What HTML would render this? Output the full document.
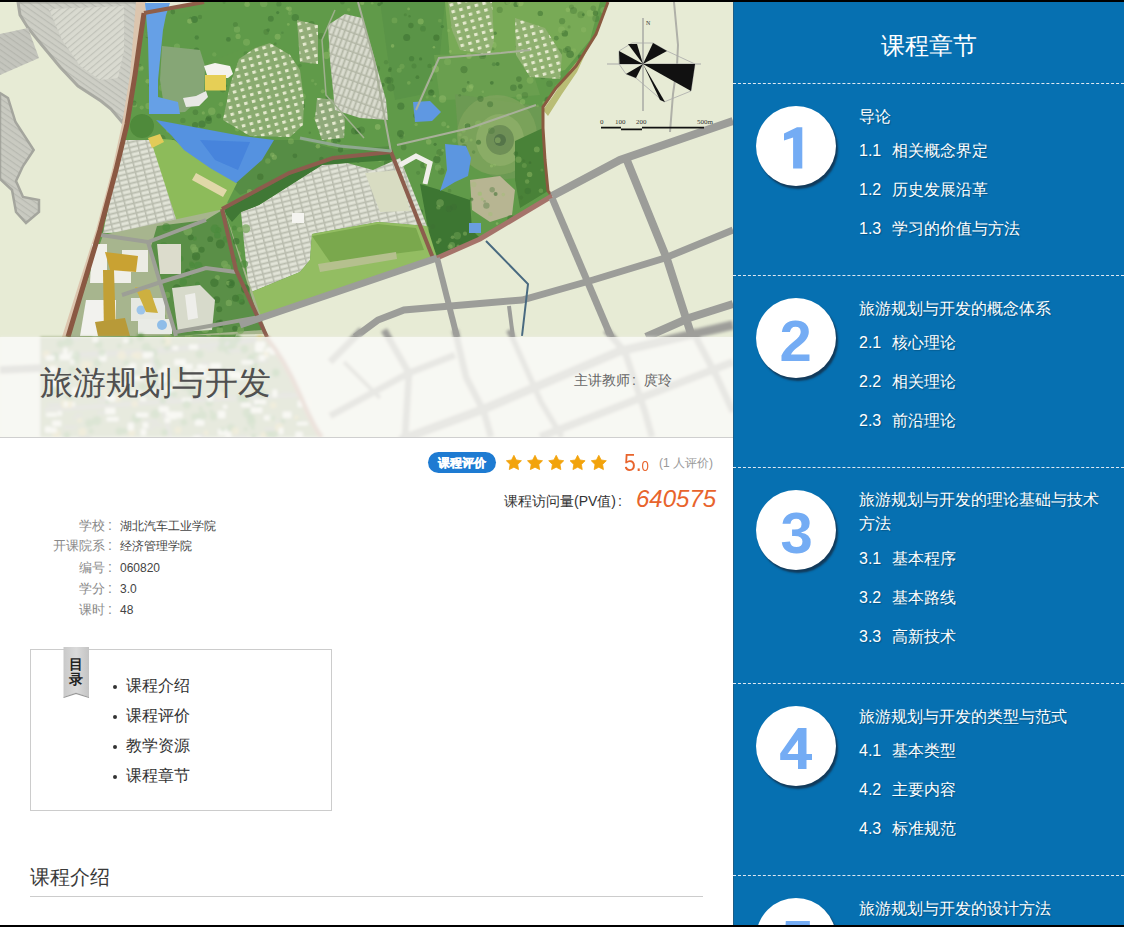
<!DOCTYPE html>
<html><head><meta charset="utf-8">
<style>
*{margin:0;padding:0;box-sizing:border-box}
html,body{width:1124px;height:927px;overflow:hidden;background:#000;font-family:"Liberation Sans",sans-serif}
#page{position:absolute;left:0;top:2px;width:1124px;height:923px;background:#fff;overflow:hidden}
#left{position:absolute;left:0;top:0;width:733px;height:923px;background:#fff}
#map{position:absolute;left:0;top:0;width:733px;height:435px;overflow:hidden;background:#e8ebd4}
#right{position:absolute;left:733px;top:0;width:391px;height:923px;background:#0670b1;color:#fff}
.abs{position:absolute;white-space:nowrap;line-height:1}
.info{position:absolute;left:0;font-size:12px;line-height:1;white-space:nowrap}
.info b{font-weight:normal;color:#8a8a8a;position:absolute;right:-105px;font-size:13px;top:-1px}
.info em{font-style:normal;color:#8a8a8a;position:absolute;left:108px;font-size:14px;top:-2px}
.info span{color:#444;position:absolute;left:120px}
#toc{position:absolute;left:30px;top:647px;width:302px;height:162px;border:1px solid #ccc}
#toc li{position:absolute;left:95px;list-style:none;font-size:16px;color:#333;line-height:1}
#toc li:before{content:"";position:absolute;left:-13.5px;top:7px;width:4px;height:4px;border-radius:50%;background:#333}
.sec{position:absolute;left:0;width:391px}
.dash{position:absolute;left:0;width:391px;height:0;border-top:1px dashed #dfe9f3}
.circ{position:absolute;left:23px;width:80px;height:80px;border-radius:50%;background:#fff;box-shadow:2px 3px 2px #123a5a}
.circ svg{display:block}
.circ text{font-family:"Liberation Sans",sans-serif;font-weight:bold;font-size:58px;fill:#74acf4}
.t i{font-style:normal;display:inline-block;width:32.5px}
.t{position:absolute;left:126px;font-size:16px;line-height:24px;white-space:nowrap;text-shadow:1px 1px 1px rgba(0,0,0,.25)}
</style></head><body>
<div id="page">
<div id="left">
  <div id="map">
<svg width="733" height="435" viewBox="0 2 733 435" style="display:block">
<defs>
<filter id="soft" x="-1%" y="-1%" width="102%" height="102%"><feGaussianBlur stdDeviation="0.6"/></filter>
<filter id="soft2" x="-5%" y="-5%" width="110%" height="110%"><feGaussianBlur stdDeviation="1.5"/></filter>
<pattern id="dots" width="8" height="7" patternUnits="userSpaceOnUse" patternTransform="rotate(-15)">
  <rect x="1" y="1" width="3.5" height="3" fill="#eef0d8" opacity=".9"/>
</pattern>
<pattern id="grid" width="9" height="5" patternUnits="userSpaceOnUse" patternTransform="rotate(-14)">
  <rect x="0" y="0" width="9" height="5" fill="#b9bcae"/><rect x="0.5" y="0.5" width="7.5" height="3.2" fill="#e2e4d8"/>
</pattern>
<pattern id="grid2" width="9" height="5" patternUnits="userSpaceOnUse" patternTransform="rotate(-70)">
  <rect x="0" y="0" width="9" height="5" fill="#b3b7a6"/><rect x="0.5" y="0.5" width="7.5" height="3.2" fill="#dadccf"/>
</pattern>
<pattern id="contour" width="5" height="5" patternUnits="userSpaceOnUse" patternTransform="rotate(35)">
  <rect x="0" y="0" width="5" height="1.2" fill="#9c9d96" opacity=".38"/>
</pattern>
<pattern id="contour2" width="5" height="5" patternUnits="userSpaceOnUse" patternTransform="rotate(-40)">
  <rect x="0" y="0" width="5" height="1.2" fill="#a5a69e" opacity=".45"/>
</pattern>
</defs>
<g filter="url(#soft)">
<rect x="0" y="0" width="733" height="440" fill="#e7ebd5"/>
<path d="M18 2 L144 2 L141 26 L132 78 L127 114 L122 122 L111 109 L101 101 L78 86 L60 67 L41 44 L28 28 L20 15 Z" fill="#cdcec5" stroke="#a9aaa2" stroke-width="3"/>
<path d="M18 2 L144 2 L141 26 L132 78 L127 114 L122 122 L111 109 L101 101 L78 86 L60 67 L41 44 L28 28 L20 15 Z" fill="url(#contour)" />
<path d="M49 9 L124 6 L124 50 L118 78 L100 80 L80 66 L62 40 Z" fill="#d9dad0" />
<path d="M49 9 L124 6 L124 50 L118 78 L100 80 L80 66 L62 40 Z" fill="url(#contour2)" />
<path d="M0 34 L28 28 L39 58 L0 75 Z" fill="#c4c5bd" />
<path d="M0 34 L28 28 L39 58 L0 75 Z" fill="url(#contour)" />
<path d="M0 93 L8 98 L15.5 122 L33.7 150 L23 166 L16 181 L23 197 L39 200 L39 212 L26 223 L16 212 L12 190 L0 179 Z" fill="#c9cac1" stroke="#a5a69e" stroke-width="2.5"/>
<path d="M0 93 L8 98 L15.5 122 L33.7 150 L23 166 L16 181 L23 197 L39 200 L39 212 L26 223 L16 212 L12 190 L0 179 Z" fill="url(#contour)" />
<path d="M136 2 L146 2 L142 40 L136 75 L129 124 L118 170 L102 230 L87 280 L70 337 L62 337 L80 280 L96 230 L112 170 L122 124 L130 75 Z" fill="#dcc5ae" />
<path d="M144 13 L204 2 L608 2 L596 34 L576 66 L556 88 L543 107 L543 128 L545 160 L548 191 L552 196 L480 239 L437 258 L240 326 L235 337 L68 337 L116 170 L127 124 Z" fill="#619a4a" />
<path d="M170 14 L300 2 L300 60 L275 42 L240 50 L205 64 L170 45 Z" fill="#5f9a4a" />
<path d="M380 2 L445 2 L440 55 L420 95 L395 100 L388 60 Z" fill="#5a9446" />
<path d="M445 2 L600 2 L590 40 L565 70 L520 80 L500 55 L450 58 Z" fill="#78aa56" />
<path d="M434 55 L527 53 L540 95 L500 98 L440 100 Z" fill="#6a9f50" />
<path d="M455 94 L543 107 L543 175 L500 180 L460 160 Z" fill="#6c9a52" />
<ellipse cx="497" cy="135" rx="40" ry="40" fill="#7ea45c" opacity=".8"/>
<ellipse cx="500" cy="140" rx="24" ry="26" fill="#8aac66"/>
<ellipse cx="500" cy="140" rx="14" ry="15" fill="#6e8f57"/>
<ellipse cx="500" cy="140" rx="6" ry="6" fill="#55744a"/>
<path d="M470 180 L500 176 L515 190 L512 215 L490 222 L472 210 Z" fill="#b7b592" />
<path d="M420 184 L440 190 L470 200 L472 230 L480 238 L437 256 L430 240 Z" fill="#3e7633" />
<path d="M515 141 L543 128 L545 160 L548 191 L520 208 L515 180 Z" fill="#4a8238" />
<path d="M260 140 L300 140 L340 150 L391 146 L393 152 L300 172 L240 195 L230 185 Z" fill="#578d44" />
<clipPath id="gclip"><path d="M144 13 L204 2 L608 2 L596 34 L576 66 L556 88 L543 107 L543 128 L545 160 L548 191 L552 196 L480 239 L437 258 L240 326 L235 337 L68 337 L116 170 L127 124 Z"/></clipPath>
<g clip-path="url(#gclip)">
<circle cx="405.6" cy="250.0" r="3.3" fill="#9cc46e" opacity="0.42"/>
<circle cx="567.9" cy="9.8" r="2.4" fill="#9cc46e" opacity="0.39"/>
<circle cx="556.3" cy="38.2" r="2.4" fill="#3a6e30" opacity="0.44"/>
<circle cx="379.1" cy="4.4" r="1.8" fill="#3a6e30" opacity="0.57"/>
<circle cx="483.0" cy="53.8" r="3.3" fill="#3a6e30" opacity="0.47"/>
<circle cx="136.7" cy="0.6" r="3.5" fill="#3a6e30" opacity="0.33"/>
<circle cx="600.5" cy="294.0" r="2.0" fill="#9cc46e" opacity="0.36"/>
<circle cx="435.4" cy="69.0" r="3.6" fill="#9cc46e" opacity="0.49"/>
<circle cx="552.4" cy="100.7" r="2.1" fill="#3a6e30" opacity="0.30"/>
<circle cx="103.3" cy="101.6" r="2.8" fill="#3a6e30" opacity="0.49"/>
<circle cx="251.1" cy="104.5" r="3.3" fill="#3a6e30" opacity="0.36"/>
<circle cx="328.8" cy="237.5" r="1.3" fill="#9cc46e" opacity="0.21"/>
<circle cx="474.4" cy="284.7" r="1.2" fill="#9cc46e" opacity="0.31"/>
<circle cx="381.6" cy="3.1" r="1.3" fill="#3a6e30" opacity="0.58"/>
<circle cx="174.5" cy="254.7" r="3.6" fill="#9cc46e" opacity="0.30"/>
<circle cx="260.3" cy="176.8" r="3.2" fill="#3a6e30" opacity="0.51"/>
<circle cx="500.1" cy="289.7" r="1.3" fill="#9cc46e" opacity="0.23"/>
<circle cx="252.7" cy="205.8" r="3.6" fill="#3a6e30" opacity="0.57"/>
<circle cx="363.5" cy="105.3" r="2.0" fill="#3a6e30" opacity="0.28"/>
<circle cx="148.7" cy="232.3" r="3.8" fill="#3a6e30" opacity="0.27"/>
<circle cx="602.8" cy="179.8" r="2.3" fill="#3a6e30" opacity="0.46"/>
<circle cx="515.9" cy="153.6" r="2.3" fill="#3a6e30" opacity="0.57"/>
<circle cx="85.7" cy="166.3" r="3.4" fill="#3a6e30" opacity="0.51"/>
<circle cx="582.8" cy="212.4" r="3.2" fill="#3a6e30" opacity="0.40"/>
<circle cx="148.9" cy="284.7" r="2.0" fill="#3a6e30" opacity="0.60"/>
<circle cx="529.9" cy="328.9" r="2.4" fill="#3a6e30" opacity="0.51"/>
<circle cx="327.6" cy="98.1" r="2.2" fill="#3a6e30" opacity="0.38"/>
<circle cx="603.7" cy="323.5" r="2.8" fill="#3a6e30" opacity="0.37"/>
<circle cx="116.3" cy="91.8" r="3.2" fill="#9cc46e" opacity="0.31"/>
<circle cx="494.0" cy="261.1" r="3.0" fill="#9cc46e" opacity="0.43"/>
<circle cx="265.0" cy="237.4" r="1.9" fill="#3a6e30" opacity="0.52"/>
<circle cx="442.5" cy="99.0" r="3.7" fill="#9cc46e" opacity="0.37"/>
<circle cx="74.3" cy="184.3" r="1.9" fill="#9cc46e" opacity="0.34"/>
<circle cx="510.6" cy="218.2" r="3.3" fill="#3a6e30" opacity="0.48"/>
<circle cx="467.9" cy="279.1" r="2.1" fill="#9cc46e" opacity="0.46"/>
<circle cx="441.1" cy="329.0" r="3.7" fill="#3a6e30" opacity="0.44"/>
<circle cx="158.1" cy="281.9" r="3.6" fill="#3a6e30" opacity="0.49"/>
<circle cx="458.1" cy="246.1" r="1.6" fill="#9cc46e" opacity="0.37"/>
<circle cx="428.7" cy="141.8" r="2.8" fill="#9cc46e" opacity="0.39"/>
<circle cx="458.5" cy="9.3" r="1.6" fill="#3a6e30" opacity="0.48"/>
<circle cx="186.7" cy="231.2" r="2.8" fill="#3a6e30" opacity="0.42"/>
<circle cx="190.6" cy="18.2" r="1.5" fill="#3a6e30" opacity="0.31"/>
<circle cx="172.8" cy="12.0" r="2.4" fill="#3a6e30" opacity="0.46"/>
<circle cx="387.9" cy="80.2" r="3.5" fill="#3a6e30" opacity="0.39"/>
<circle cx="219.0" cy="138.2" r="1.5" fill="#9cc46e" opacity="0.31"/>
<circle cx="87.5" cy="206.8" r="1.4" fill="#3a6e30" opacity="0.37"/>
<circle cx="382.8" cy="322.9" r="3.3" fill="#3a6e30" opacity="0.53"/>
<circle cx="416.1" cy="124.5" r="1.6" fill="#9cc46e" opacity="0.37"/>
<circle cx="586.8" cy="326.2" r="2.8" fill="#3a6e30" opacity="0.56"/>
<circle cx="68.5" cy="36.4" r="2.7" fill="#9cc46e" opacity="0.24"/>
<circle cx="409.2" cy="300.4" r="2.2" fill="#3a6e30" opacity="0.33"/>
<circle cx="226.0" cy="327.7" r="2.2" fill="#9cc46e" opacity="0.47"/>
<circle cx="390.9" cy="87.6" r="3.8" fill="#3a6e30" opacity="0.40"/>
<circle cx="241.0" cy="331.7" r="2.5" fill="#3a6e30" opacity="0.42"/>
<circle cx="134.1" cy="209.5" r="2.4" fill="#3a6e30" opacity="0.52"/>
<circle cx="516.1" cy="4.4" r="2.6" fill="#3a6e30" opacity="0.58"/>
<circle cx="491.8" cy="82.8" r="1.9" fill="#3a6e30" opacity="0.60"/>
<circle cx="226.9" cy="204.9" r="2.4" fill="#9cc46e" opacity="0.38"/>
<circle cx="471.0" cy="39.8" r="3.2" fill="#3a6e30" opacity="0.44"/>
<circle cx="250.2" cy="100.0" r="2.6" fill="#3a6e30" opacity="0.38"/>
<circle cx="471.8" cy="199.1" r="1.3" fill="#3a6e30" opacity="0.41"/>
<circle cx="564.8" cy="299.2" r="2.6" fill="#3a6e30" opacity="0.52"/>
<circle cx="299.8" cy="194.0" r="3.0" fill="#9cc46e" opacity="0.34"/>
<circle cx="562.1" cy="129.9" r="2.2" fill="#9cc46e" opacity="0.26"/>
<circle cx="228.7" cy="279.7" r="1.4" fill="#9cc46e" opacity="0.41"/>
<circle cx="302.6" cy="96.5" r="3.2" fill="#9cc46e" opacity="0.24"/>
<circle cx="327.3" cy="185.0" r="2.5" fill="#3a6e30" opacity="0.30"/>
<circle cx="385.5" cy="273.6" r="1.4" fill="#3a6e30" opacity="0.54"/>
<circle cx="497.1" cy="223.6" r="1.3" fill="#9cc46e" opacity="0.49"/>
<circle cx="609.1" cy="236.3" r="1.3" fill="#9cc46e" opacity="0.27"/>
<circle cx="418.0" cy="320.9" r="3.1" fill="#3a6e30" opacity="0.35"/>
<circle cx="565.6" cy="50.5" r="2.8" fill="#3a6e30" opacity="0.31"/>
<circle cx="405.3" cy="14.7" r="1.5" fill="#3a6e30" opacity="0.28"/>
<circle cx="99.2" cy="193.9" r="3.1" fill="#9cc46e" opacity="0.24"/>
<circle cx="302.0" cy="106.0" r="2.8" fill="#3a6e30" opacity="0.58"/>
<circle cx="270.8" cy="18.8" r="3.0" fill="#3a6e30" opacity="0.47"/>
<circle cx="342.2" cy="306.8" r="2.6" fill="#9cc46e" opacity="0.28"/>
<circle cx="367.0" cy="85.7" r="3.2" fill="#3a6e30" opacity="0.30"/>
<circle cx="195.1" cy="125.1" r="3.1" fill="#3a6e30" opacity="0.50"/>
<circle cx="423.0" cy="28.7" r="2.9" fill="#3a6e30" opacity="0.29"/>
<circle cx="389.9" cy="80.4" r="3.5" fill="#3a6e30" opacity="0.36"/>
<circle cx="499.7" cy="9.9" r="3.1" fill="#3a6e30" opacity="0.30"/>
<circle cx="584.0" cy="229.5" r="1.8" fill="#3a6e30" opacity="0.59"/>
<circle cx="428.5" cy="276.5" r="1.6" fill="#9cc46e" opacity="0.31"/>
<circle cx="195.4" cy="112.3" r="2.8" fill="#3a6e30" opacity="0.39"/>
<circle cx="141.9" cy="280.1" r="2.9" fill="#9cc46e" opacity="0.33"/>
<circle cx="529.6" cy="174.4" r="2.7" fill="#9cc46e" opacity="0.42"/>
<circle cx="282.4" cy="32.7" r="1.3" fill="#3a6e30" opacity="0.26"/>
<circle cx="550.0" cy="162.1" r="3.2" fill="#3a6e30" opacity="0.41"/>
<circle cx="550.3" cy="208.8" r="2.3" fill="#3a6e30" opacity="0.28"/>
<circle cx="151.8" cy="53.6" r="2.2" fill="#3a6e30" opacity="0.56"/>
<circle cx="150.4" cy="85.6" r="1.9" fill="#3a6e30" opacity="0.35"/>
<circle cx="195.5" cy="162.4" r="1.3" fill="#9cc46e" opacity="0.31"/>
<circle cx="576.4" cy="231.8" r="3.0" fill="#3a6e30" opacity="0.58"/>
<circle cx="131.9" cy="225.3" r="2.0" fill="#9cc46e" opacity="0.42"/>
<circle cx="156.5" cy="67.7" r="1.3" fill="#3a6e30" opacity="0.28"/>
<circle cx="285.4" cy="328.1" r="2.1" fill="#3a6e30" opacity="0.41"/>
<circle cx="221.5" cy="246.8" r="3.1" fill="#3a6e30" opacity="0.33"/>
<circle cx="432.3" cy="316.9" r="2.9" fill="#3a6e30" opacity="0.59"/>
<circle cx="71.4" cy="20.5" r="3.2" fill="#3a6e30" opacity="0.27"/>
<circle cx="365.2" cy="333.5" r="2.5" fill="#3a6e30" opacity="0.28"/>
<circle cx="106.6" cy="302.9" r="2.5" fill="#9cc46e" opacity="0.22"/>
<circle cx="200.0" cy="17.0" r="2.2" fill="#3a6e30" opacity="0.34"/>
<circle cx="288.8" cy="103.1" r="1.3" fill="#3a6e30" opacity="0.59"/>
<circle cx="165.2" cy="171.4" r="2.2" fill="#3a6e30" opacity="0.28"/>
<circle cx="238.1" cy="36.4" r="2.6" fill="#9cc46e" opacity="0.38"/>
<circle cx="532.4" cy="72.3" r="1.2" fill="#3a6e30" opacity="0.42"/>
<circle cx="377.7" cy="126.9" r="2.8" fill="#9cc46e" opacity="0.47"/>
<circle cx="234.7" cy="151.3" r="3.3" fill="#3a6e30" opacity="0.29"/>
<circle cx="237.0" cy="29.5" r="3.2" fill="#9cc46e" opacity="0.29"/>
<circle cx="138.4" cy="27.6" r="1.8" fill="#3a6e30" opacity="0.40"/>
<circle cx="380.7" cy="82.7" r="1.4" fill="#9cc46e" opacity="0.21"/>
<circle cx="176.3" cy="96.4" r="2.2" fill="#3a6e30" opacity="0.40"/>
<circle cx="238.1" cy="253.5" r="2.6" fill="#9cc46e" opacity="0.40"/>
<circle cx="479.8" cy="193.7" r="2.3" fill="#9cc46e" opacity="0.40"/>
<circle cx="585.5" cy="245.3" r="3.0" fill="#3a6e30" opacity="0.53"/>
<circle cx="275.3" cy="43.9" r="1.4" fill="#3a6e30" opacity="0.34"/>
<circle cx="434.3" cy="96.2" r="1.4" fill="#9cc46e" opacity="0.37"/>
<circle cx="82.9" cy="17.1" r="1.5" fill="#3a6e30" opacity="0.55"/>
<circle cx="582.5" cy="206.2" r="1.8" fill="#3a6e30" opacity="0.38"/>
<circle cx="247.1" cy="4.2" r="2.7" fill="#9cc46e" opacity="0.42"/>
<circle cx="119.7" cy="178.7" r="1.6" fill="#9cc46e" opacity="0.33"/>
<circle cx="576.7" cy="267.8" r="1.5" fill="#3a6e30" opacity="0.57"/>
<circle cx="317.9" cy="146.3" r="2.3" fill="#9cc46e" opacity="0.48"/>
<circle cx="356.7" cy="326.8" r="2.7" fill="#3a6e30" opacity="0.53"/>
<circle cx="295.3" cy="17.6" r="3.7" fill="#3a6e30" opacity="0.45"/>
<circle cx="329.2" cy="297.2" r="2.2" fill="#3a6e30" opacity="0.35"/>
<circle cx="177.0" cy="189.5" r="2.1" fill="#9cc46e" opacity="0.27"/>
<circle cx="258.7" cy="83.7" r="3.8" fill="#9cc46e" opacity="0.45"/>
<circle cx="403.0" cy="135.1" r="1.6" fill="#9cc46e" opacity="0.35"/>
<circle cx="88.5" cy="57.1" r="1.5" fill="#9cc46e" opacity="0.47"/>
<circle cx="176.0" cy="268.6" r="2.0" fill="#9cc46e" opacity="0.46"/>
<circle cx="405.7" cy="269.7" r="2.2" fill="#3a6e30" opacity="0.43"/>
<circle cx="386.0" cy="62.3" r="2.2" fill="#3a6e30" opacity="0.26"/>
<circle cx="237.1" cy="129.0" r="2.4" fill="#9cc46e" opacity="0.32"/>
<circle cx="600.5" cy="274.8" r="3.6" fill="#9cc46e" opacity="0.40"/>
<circle cx="358.9" cy="269.2" r="2.1" fill="#9cc46e" opacity="0.40"/>
<circle cx="351.0" cy="95.8" r="1.4" fill="#3a6e30" opacity="0.37"/>
<circle cx="382.6" cy="256.0" r="3.1" fill="#3a6e30" opacity="0.58"/>
<circle cx="216.8" cy="241.3" r="1.4" fill="#9cc46e" opacity="0.40"/>
<circle cx="586.6" cy="302.3" r="3.0" fill="#9cc46e" opacity="0.42"/>
<circle cx="399.2" cy="70.3" r="2.5" fill="#9cc46e" opacity="0.27"/>
<circle cx="596.3" cy="183.3" r="2.2" fill="#3a6e30" opacity="0.39"/>
<circle cx="164.5" cy="220.1" r="3.5" fill="#9cc46e" opacity="0.38"/>
<circle cx="277.6" cy="36.7" r="3.0" fill="#9cc46e" opacity="0.41"/>
<circle cx="270.7" cy="298.8" r="1.8" fill="#3a6e30" opacity="0.34"/>
<circle cx="405.2" cy="302.4" r="1.6" fill="#9cc46e" opacity="0.43"/>
<circle cx="189.8" cy="21.1" r="2.7" fill="#9cc46e" opacity="0.46"/>
<circle cx="462.6" cy="140.5" r="2.3" fill="#3a6e30" opacity="0.57"/>
<circle cx="231.9" cy="94.6" r="2.8" fill="#9cc46e" opacity="0.26"/>
<circle cx="84.5" cy="39.0" r="2.7" fill="#9cc46e" opacity="0.26"/>
<circle cx="171.1" cy="200.4" r="2.9" fill="#9cc46e" opacity="0.42"/>
<circle cx="101.3" cy="163.3" r="3.4" fill="#9cc46e" opacity="0.30"/>
<circle cx="528.9" cy="217.4" r="3.6" fill="#3a6e30" opacity="0.49"/>
<circle cx="523.7" cy="160.7" r="1.5" fill="#3a6e30" opacity="0.30"/>
<circle cx="118.3" cy="51.2" r="2.8" fill="#3a6e30" opacity="0.52"/>
<circle cx="467.0" cy="275.1" r="3.3" fill="#9cc46e" opacity="0.48"/>
<circle cx="586.6" cy="210.7" r="3.7" fill="#3a6e30" opacity="0.29"/>
<circle cx="102.9" cy="69.6" r="2.2" fill="#3a6e30" opacity="0.49"/>
<circle cx="470.7" cy="28.2" r="2.2" fill="#3a6e30" opacity="0.38"/>
<circle cx="131.7" cy="201.2" r="2.2" fill="#9cc46e" opacity="0.35"/>
<circle cx="589.8" cy="318.5" r="1.4" fill="#9cc46e" opacity="0.42"/>
<circle cx="228.4" cy="39.4" r="2.4" fill="#3a6e30" opacity="0.51"/>
<circle cx="565.8" cy="128.8" r="2.0" fill="#3a6e30" opacity="0.49"/>
<circle cx="495.6" cy="194.0" r="2.0" fill="#3a6e30" opacity="0.55"/>
<circle cx="349.4" cy="17.0" r="2.3" fill="#3a6e30" opacity="0.48"/>
<circle cx="107.8" cy="91.3" r="1.4" fill="#3a6e30" opacity="0.59"/>
<circle cx="361.4" cy="130.2" r="3.6" fill="#3a6e30" opacity="0.37"/>
<circle cx="507.4" cy="1.7" r="3.2" fill="#3a6e30" opacity="0.26"/>
<circle cx="204.0" cy="154.4" r="2.2" fill="#3a6e30" opacity="0.27"/>
<circle cx="186.5" cy="328.3" r="2.4" fill="#3a6e30" opacity="0.28"/>
<circle cx="219.3" cy="321.8" r="3.0" fill="#3a6e30" opacity="0.27"/>
<circle cx="280.9" cy="262.3" r="2.3" fill="#9cc46e" opacity="0.47"/>
<circle cx="417.7" cy="214.3" r="1.3" fill="#3a6e30" opacity="0.52"/>
<circle cx="292.0" cy="294.6" r="3.3" fill="#9cc46e" opacity="0.31"/>
<circle cx="609.5" cy="254.9" r="3.5" fill="#3a6e30" opacity="0.52"/>
<circle cx="296.8" cy="327.6" r="3.8" fill="#3a6e30" opacity="0.40"/>
<circle cx="214.8" cy="158.3" r="1.9" fill="#9cc46e" opacity="0.24"/>
<circle cx="159.7" cy="154.2" r="1.4" fill="#3a6e30" opacity="0.56"/>
<circle cx="547.8" cy="66.2" r="1.2" fill="#9cc46e" opacity="0.49"/>
<circle cx="392.6" cy="45.9" r="1.8" fill="#9cc46e" opacity="0.48"/>
<circle cx="84.9" cy="62.3" r="2.3" fill="#3a6e30" opacity="0.51"/>
<circle cx="270.1" cy="261.2" r="1.6" fill="#3a6e30" opacity="0.59"/>
<circle cx="448.5" cy="30.4" r="1.5" fill="#9cc46e" opacity="0.31"/>
<circle cx="267.8" cy="161.0" r="2.7" fill="#9cc46e" opacity="0.27"/>
<circle cx="376.2" cy="88.7" r="2.6" fill="#9cc46e" opacity="0.24"/>
<circle cx="328.8" cy="237.8" r="1.2" fill="#9cc46e" opacity="0.33"/>
<circle cx="341.3" cy="205.7" r="3.3" fill="#3a6e30" opacity="0.43"/>
<circle cx="88.8" cy="129.9" r="2.1" fill="#3a6e30" opacity="0.35"/>
<circle cx="311.9" cy="220.7" r="3.6" fill="#3a6e30" opacity="0.44"/>
<circle cx="454.5" cy="315.9" r="3.7" fill="#9cc46e" opacity="0.29"/>
<circle cx="158.3" cy="314.0" r="1.4" fill="#3a6e30" opacity="0.51"/>
<circle cx="354.6" cy="131.0" r="3.6" fill="#3a6e30" opacity="0.44"/>
<circle cx="517.7" cy="46.5" r="2.1" fill="#3a6e30" opacity="0.45"/>
<circle cx="180.4" cy="153.0" r="1.4" fill="#3a6e30" opacity="0.37"/>
<circle cx="145.9" cy="326.1" r="1.9" fill="#3a6e30" opacity="0.52"/>
<circle cx="469.7" cy="88.3" r="3.4" fill="#9cc46e" opacity="0.32"/>
<circle cx="408.8" cy="82.8" r="1.9" fill="#9cc46e" opacity="0.33"/>
<circle cx="554.3" cy="59.6" r="1.6" fill="#3a6e30" opacity="0.51"/>
<circle cx="372.2" cy="3.3" r="1.3" fill="#9cc46e" opacity="0.35"/>
<circle cx="540.3" cy="13.4" r="2.7" fill="#3a6e30" opacity="0.50"/>
<circle cx="399.3" cy="206.3" r="1.8" fill="#9cc46e" opacity="0.23"/>
<circle cx="102.7" cy="230.5" r="1.4" fill="#3a6e30" opacity="0.41"/>
<circle cx="419.7" cy="300.6" r="3.1" fill="#3a6e30" opacity="0.48"/>
<circle cx="525.2" cy="40.6" r="3.2" fill="#3a6e30" opacity="0.35"/>
<circle cx="68.8" cy="255.5" r="2.5" fill="#9cc46e" opacity="0.34"/>
<circle cx="152.2" cy="72.9" r="1.9" fill="#9cc46e" opacity="0.26"/>
<circle cx="115.8" cy="118.9" r="1.4" fill="#3a6e30" opacity="0.47"/>
<circle cx="420.6" cy="58.9" r="1.6" fill="#3a6e30" opacity="0.49"/>
<circle cx="310.4" cy="193.2" r="3.6" fill="#3a6e30" opacity="0.34"/>
<circle cx="335.6" cy="180.7" r="3.5" fill="#9cc46e" opacity="0.40"/>
<circle cx="295.4" cy="264.3" r="3.4" fill="#3a6e30" opacity="0.29"/>
<circle cx="208.5" cy="120.5" r="3.5" fill="#3a6e30" opacity="0.47"/>
<circle cx="415.2" cy="322.2" r="1.5" fill="#9cc46e" opacity="0.30"/>
<circle cx="123.8" cy="213.0" r="3.4" fill="#9cc46e" opacity="0.21"/>
<circle cx="594.9" cy="129.5" r="2.9" fill="#9cc46e" opacity="0.28"/>
<circle cx="289.3" cy="111.0" r="1.4" fill="#3a6e30" opacity="0.50"/>
<circle cx="290.5" cy="293.1" r="1.4" fill="#3a6e30" opacity="0.31"/>
<circle cx="579.3" cy="266.4" r="3.5" fill="#3a6e30" opacity="0.29"/>
<circle cx="293.6" cy="76.2" r="1.3" fill="#9cc46e" opacity="0.29"/>
<circle cx="126.5" cy="172.4" r="3.6" fill="#9cc46e" opacity="0.34"/>
<circle cx="123.7" cy="259.1" r="1.5" fill="#3a6e30" opacity="0.28"/>
<circle cx="603.1" cy="182.9" r="2.3" fill="#3a6e30" opacity="0.44"/>
<circle cx="595.3" cy="144.2" r="1.7" fill="#3a6e30" opacity="0.57"/>
<circle cx="274.9" cy="213.6" r="3.6" fill="#3a6e30" opacity="0.53"/>
<circle cx="354.7" cy="47.0" r="1.3" fill="#9cc46e" opacity="0.34"/>
<circle cx="308.2" cy="309.2" r="2.7" fill="#3a6e30" opacity="0.35"/>
<circle cx="471.3" cy="86.4" r="2.4" fill="#9cc46e" opacity="0.38"/>
<circle cx="140.7" cy="68.3" r="3.0" fill="#9cc46e" opacity="0.23"/>
<circle cx="608.7" cy="45.0" r="1.6" fill="#3a6e30" opacity="0.41"/>
<circle cx="403.8" cy="288.9" r="1.6" fill="#9cc46e" opacity="0.23"/>
<circle cx="382.6" cy="84.9" r="2.1" fill="#3a6e30" opacity="0.50"/>
<circle cx="134.3" cy="257.5" r="2.1" fill="#9cc46e" opacity="0.39"/>
<circle cx="332.9" cy="294.4" r="3.6" fill="#3a6e30" opacity="0.37"/>
<circle cx="543.3" cy="44.8" r="2.3" fill="#3a6e30" opacity="0.59"/>
<circle cx="137.5" cy="220.8" r="3.2" fill="#9cc46e" opacity="0.20"/>
<circle cx="579.5" cy="105.3" r="3.4" fill="#9cc46e" opacity="0.33"/>
<circle cx="522.0" cy="227.7" r="2.1" fill="#9cc46e" opacity="0.35"/>
<circle cx="453.7" cy="207.0" r="3.3" fill="#3a6e30" opacity="0.42"/>
<circle cx="68.7" cy="266.5" r="3.2" fill="#9cc46e" opacity="0.21"/>
<circle cx="358.1" cy="161.3" r="1.5" fill="#3a6e30" opacity="0.59"/>
<circle cx="530.1" cy="80.3" r="3.4" fill="#9cc46e" opacity="0.32"/>
<circle cx="417.4" cy="77.2" r="1.9" fill="#3a6e30" opacity="0.48"/>
<circle cx="383.1" cy="250.5" r="2.5" fill="#3a6e30" opacity="0.36"/>
<circle cx="466.5" cy="125.6" r="2.8" fill="#9cc46e" opacity="0.33"/>
<circle cx="439.9" cy="20.7" r="1.9" fill="#9cc46e" opacity="0.24"/>
<circle cx="98.8" cy="4.9" r="3.2" fill="#3a6e30" opacity="0.41"/>
<circle cx="305.6" cy="270.6" r="2.4" fill="#3a6e30" opacity="0.26"/>
<circle cx="499.0" cy="258.6" r="2.8" fill="#9cc46e" opacity="0.38"/>
<circle cx="456.1" cy="286.8" r="2.8" fill="#3a6e30" opacity="0.56"/>
<circle cx="604.3" cy="67.8" r="1.4" fill="#3a6e30" opacity="0.29"/>
<circle cx="268.2" cy="30.1" r="1.8" fill="#3a6e30" opacity="0.40"/>
<circle cx="230.6" cy="245.6" r="2.2" fill="#3a6e30" opacity="0.58"/>
<circle cx="552.8" cy="232.3" r="1.8" fill="#3a6e30" opacity="0.41"/>
<circle cx="289.5" cy="8.9" r="2.4" fill="#9cc46e" opacity="0.41"/>
<circle cx="534.3" cy="230.1" r="3.2" fill="#9cc46e" opacity="0.48"/>
<circle cx="497.8" cy="140.2" r="2.9" fill="#9cc46e" opacity="0.46"/>
<circle cx="454.8" cy="149.4" r="1.7" fill="#3a6e30" opacity="0.34"/>
<circle cx="437.6" cy="259.3" r="1.7" fill="#3a6e30" opacity="0.54"/>
<circle cx="266.2" cy="31.9" r="2.8" fill="#3a6e30" opacity="0.30"/>
<circle cx="224.1" cy="2.3" r="1.6" fill="#3a6e30" opacity="0.29"/>
<circle cx="71.3" cy="185.3" r="3.7" fill="#9cc46e" opacity="0.30"/>
<circle cx="569.1" cy="26.9" r="1.6" fill="#3a6e30" opacity="0.27"/>
<circle cx="394.2" cy="255.1" r="2.4" fill="#9cc46e" opacity="0.34"/>
<circle cx="565.9" cy="204.9" r="2.6" fill="#3a6e30" opacity="0.40"/>
<circle cx="306.7" cy="277.3" r="1.8" fill="#3a6e30" opacity="0.54"/>
<circle cx="106.4" cy="181.0" r="1.8" fill="#9cc46e" opacity="0.38"/>
<circle cx="119.1" cy="246.1" r="2.3" fill="#3a6e30" opacity="0.55"/>
<circle cx="490.1" cy="104.3" r="3.0" fill="#3a6e30" opacity="0.43"/>
<circle cx="112.7" cy="215.9" r="3.6" fill="#9cc46e" opacity="0.21"/>
<circle cx="346.1" cy="158.2" r="2.4" fill="#3a6e30" opacity="0.35"/>
<circle cx="311.6" cy="24.0" r="3.0" fill="#3a6e30" opacity="0.35"/>
<circle cx="117.2" cy="102.0" r="3.6" fill="#3a6e30" opacity="0.28"/>
<circle cx="255.4" cy="318.5" r="1.4" fill="#3a6e30" opacity="0.32"/>
<circle cx="437.5" cy="155.6" r="1.5" fill="#9cc46e" opacity="0.30"/>
<circle cx="439.8" cy="152.6" r="3.5" fill="#3a6e30" opacity="0.33"/>
<circle cx="222.8" cy="89.1" r="3.3" fill="#3a6e30" opacity="0.37"/>
<circle cx="342.7" cy="285.0" r="2.7" fill="#3a6e30" opacity="0.48"/>
<circle cx="401.4" cy="136.6" r="2.3" fill="#3a6e30" opacity="0.40"/>
<circle cx="544.4" cy="103.1" r="2.1" fill="#9cc46e" opacity="0.38"/>
<circle cx="163.0" cy="150.3" r="3.1" fill="#3a6e30" opacity="0.29"/>
<circle cx="477.4" cy="305.1" r="1.4" fill="#3a6e30" opacity="0.47"/>
<circle cx="222.2" cy="221.2" r="1.3" fill="#3a6e30" opacity="0.31"/>
<circle cx="248.0" cy="233.7" r="2.5" fill="#9cc46e" opacity="0.45"/>
<circle cx="403.7" cy="285.6" r="1.7" fill="#3a6e30" opacity="0.36"/>
<circle cx="406.7" cy="37.5" r="3.5" fill="#3a6e30" opacity="0.52"/>
<circle cx="579.0" cy="316.9" r="2.2" fill="#9cc46e" opacity="0.50"/>
<circle cx="138.6" cy="251.9" r="3.1" fill="#3a6e30" opacity="0.35"/>
<circle cx="162.0" cy="138.7" r="3.6" fill="#3a6e30" opacity="0.34"/>
<circle cx="403.7" cy="147.4" r="2.8" fill="#3a6e30" opacity="0.35"/>
<circle cx="87.2" cy="275.8" r="2.9" fill="#3a6e30" opacity="0.42"/>
<circle cx="382.9" cy="169.7" r="3.5" fill="#9cc46e" opacity="0.29"/>
<circle cx="251.6" cy="206.2" r="1.6" fill="#9cc46e" opacity="0.21"/>
<circle cx="338.7" cy="92.1" r="2.6" fill="#3a6e30" opacity="0.33"/>
<circle cx="604.1" cy="265.6" r="1.8" fill="#3a6e30" opacity="0.26"/>
<circle cx="134.1" cy="64.6" r="3.8" fill="#3a6e30" opacity="0.34"/>
<circle cx="103.4" cy="37.0" r="3.8" fill="#9cc46e" opacity="0.48"/>
<circle cx="520.9" cy="263.8" r="1.9" fill="#3a6e30" opacity="0.34"/>
<circle cx="103.5" cy="59.1" r="3.1" fill="#3a6e30" opacity="0.25"/>
<circle cx="233.2" cy="286.3" r="3.4" fill="#9cc46e" opacity="0.42"/>
<circle cx="562.2" cy="187.8" r="2.2" fill="#9cc46e" opacity="0.28"/>
<circle cx="87.8" cy="87.6" r="2.4" fill="#3a6e30" opacity="0.28"/>
<circle cx="202.0" cy="124.1" r="3.7" fill="#3a6e30" opacity="0.54"/>
<circle cx="471.5" cy="199.6" r="2.0" fill="#3a6e30" opacity="0.36"/>
<circle cx="411.8" cy="288.2" r="3.3" fill="#3a6e30" opacity="0.30"/>
<circle cx="72.8" cy="197.0" r="1.8" fill="#3a6e30" opacity="0.36"/>
<circle cx="191.8" cy="69.2" r="2.9" fill="#9cc46e" opacity="0.28"/>
<circle cx="464.0" cy="69.6" r="3.6" fill="#3a6e30" opacity="0.46"/>
<circle cx="450.1" cy="246.8" r="2.5" fill="#9cc46e" opacity="0.39"/>
<circle cx="442.4" cy="26.6" r="1.7" fill="#3a6e30" opacity="0.44"/>
<circle cx="119.6" cy="250.0" r="2.1" fill="#3a6e30" opacity="0.43"/>
<circle cx="522.6" cy="101.8" r="2.7" fill="#9cc46e" opacity="0.40"/>
<circle cx="237.2" cy="94.1" r="2.4" fill="#9cc46e" opacity="0.39"/>
<circle cx="140.5" cy="150.3" r="2.7" fill="#3a6e30" opacity="0.29"/>
<circle cx="571.5" cy="7.0" r="2.5" fill="#3a6e30" opacity="0.26"/>
<circle cx="214.3" cy="54.4" r="2.2" fill="#9cc46e" opacity="0.22"/>
<circle cx="258.6" cy="234.2" r="2.8" fill="#3a6e30" opacity="0.33"/>
<circle cx="220.4" cy="301.6" r="2.3" fill="#3a6e30" opacity="0.42"/>
<circle cx="330.9" cy="50.4" r="2.9" fill="#9cc46e" opacity="0.34"/>
<circle cx="359.3" cy="259.7" r="3.7" fill="#9cc46e" opacity="0.21"/>
<circle cx="341.8" cy="223.2" r="2.1" fill="#9cc46e" opacity="0.31"/>
<circle cx="402.1" cy="207.0" r="2.9" fill="#9cc46e" opacity="0.41"/>
<circle cx="452.5" cy="237.3" r="1.8" fill="#9cc46e" opacity="0.39"/>
<circle cx="101.1" cy="254.2" r="1.8" fill="#3a6e30" opacity="0.43"/>
<circle cx="459.4" cy="257.9" r="2.4" fill="#9cc46e" opacity="0.33"/>
<circle cx="375.0" cy="334.2" r="2.0" fill="#9cc46e" opacity="0.49"/>
<circle cx="113.8" cy="261.9" r="2.9" fill="#3a6e30" opacity="0.53"/>
<circle cx="534.1" cy="49.4" r="2.5" fill="#9cc46e" opacity="0.41"/>
<circle cx="587.5" cy="270.6" r="3.4" fill="#3a6e30" opacity="0.40"/>
<circle cx="563.1" cy="318.8" r="3.2" fill="#3a6e30" opacity="0.52"/>
<circle cx="356.2" cy="224.9" r="2.9" fill="#9cc46e" opacity="0.41"/>
<circle cx="594.0" cy="166.3" r="2.5" fill="#9cc46e" opacity="0.37"/>
<circle cx="94.6" cy="323.3" r="2.0" fill="#3a6e30" opacity="0.26"/>
<circle cx="171.2" cy="313.0" r="1.9" fill="#3a6e30" opacity="0.53"/>
<circle cx="198.8" cy="224.9" r="2.7" fill="#9cc46e" opacity="0.34"/>
<circle cx="246.1" cy="87.3" r="2.1" fill="#3a6e30" opacity="0.29"/>
<circle cx="148.6" cy="106.0" r="3.2" fill="#9cc46e" opacity="0.31"/>
<circle cx="203.4" cy="98.8" r="2.8" fill="#3a6e30" opacity="0.29"/>
<circle cx="351.9" cy="90.6" r="1.6" fill="#9cc46e" opacity="0.23"/>
<circle cx="306.1" cy="258.1" r="2.6" fill="#9cc46e" opacity="0.30"/>
<circle cx="580.9" cy="14.7" r="3.5" fill="#3a6e30" opacity="0.25"/>
<circle cx="208.6" cy="333.2" r="3.1" fill="#9cc46e" opacity="0.44"/>
<circle cx="71.5" cy="103.4" r="2.4" fill="#9cc46e" opacity="0.47"/>
<circle cx="149.0" cy="332.7" r="2.6" fill="#3a6e30" opacity="0.28"/>
<circle cx="299.3" cy="175.4" r="2.4" fill="#3a6e30" opacity="0.58"/>
<circle cx="325.6" cy="103.7" r="3.2" fill="#3a6e30" opacity="0.40"/>
<circle cx="124.4" cy="80.2" r="3.8" fill="#9cc46e" opacity="0.36"/>
<circle cx="432.9" cy="226.5" r="2.6" fill="#3a6e30" opacity="0.30"/>
<circle cx="84.0" cy="40.8" r="2.3" fill="#3a6e30" opacity="0.49"/>
<circle cx="250.8" cy="78.7" r="2.0" fill="#3a6e30" opacity="0.32"/>
<circle cx="530.0" cy="162.7" r="1.4" fill="#3a6e30" opacity="0.56"/>
<circle cx="381.4" cy="98.2" r="3.1" fill="#3a6e30" opacity="0.56"/>
<circle cx="575.6" cy="223.9" r="1.3" fill="#3a6e30" opacity="0.54"/>
<circle cx="389.7" cy="70.4" r="1.8" fill="#3a6e30" opacity="0.43"/>
<circle cx="166.3" cy="150.1" r="3.5" fill="#9cc46e" opacity="0.35"/>
<circle cx="492.9" cy="45.2" r="3.7" fill="#9cc46e" opacity="0.34"/>
<circle cx="548.2" cy="100.2" r="3.7" fill="#3a6e30" opacity="0.57"/>
<circle cx="521.7" cy="314.9" r="3.1" fill="#3a6e30" opacity="0.35"/>
<circle cx="423.4" cy="306.2" r="3.0" fill="#3a6e30" opacity="0.37"/>
<circle cx="255.0" cy="57.7" r="1.8" fill="#3a6e30" opacity="0.38"/>
<circle cx="212.7" cy="138.9" r="3.7" fill="#9cc46e" opacity="0.43"/>
<circle cx="573.5" cy="10.4" r="3.5" fill="#3a6e30" opacity="0.32"/>
<circle cx="468.8" cy="253.7" r="2.8" fill="#3a6e30" opacity="0.50"/>
<circle cx="300.0" cy="65.5" r="1.8" fill="#3a6e30" opacity="0.26"/>
<circle cx="584.0" cy="320.2" r="2.1" fill="#3a6e30" opacity="0.35"/>
<circle cx="491.5" cy="165.9" r="1.6" fill="#9cc46e" opacity="0.48"/>
<circle cx="93.2" cy="154.7" r="1.8" fill="#9cc46e" opacity="0.31"/>
<circle cx="229.4" cy="101.9" r="2.8" fill="#3a6e30" opacity="0.42"/>
<circle cx="436.9" cy="159.5" r="3.7" fill="#3a6e30" opacity="0.53"/>
<circle cx="572.3" cy="209.5" r="2.7" fill="#9cc46e" opacity="0.41"/>
<circle cx="172.9" cy="140.5" r="1.6" fill="#3a6e30" opacity="0.49"/>
<circle cx="246.2" cy="85.9" r="1.3" fill="#3a6e30" opacity="0.49"/>
<circle cx="262.0" cy="146.9" r="3.0" fill="#9cc46e" opacity="0.41"/>
<circle cx="186.8" cy="333.3" r="1.7" fill="#9cc46e" opacity="0.39"/>
<circle cx="223.8" cy="299.6" r="2.8" fill="#9cc46e" opacity="0.24"/>
<circle cx="519.1" cy="96.8" r="2.8" fill="#9cc46e" opacity="0.30"/>
<circle cx="211.8" cy="111.3" r="3.7" fill="#9cc46e" opacity="0.34"/>
<circle cx="372.6" cy="221.0" r="1.9" fill="#3a6e30" opacity="0.29"/>
<circle cx="383.5" cy="201.8" r="3.7" fill="#9cc46e" opacity="0.46"/>
<circle cx="602.9" cy="167.3" r="2.3" fill="#3a6e30" opacity="0.38"/>
<circle cx="480.0" cy="193.8" r="1.5" fill="#9cc46e" opacity="0.36"/>
<circle cx="473.8" cy="184.5" r="2.7" fill="#9cc46e" opacity="0.23"/>
<circle cx="138.9" cy="246.3" r="2.1" fill="#3a6e30" opacity="0.54"/>
<circle cx="473.4" cy="257.4" r="2.2" fill="#3a6e30" opacity="0.52"/>
<circle cx="184.9" cy="225.2" r="3.0" fill="#3a6e30" opacity="0.25"/>
<circle cx="388.0" cy="266.3" r="2.7" fill="#9cc46e" opacity="0.27"/>
<circle cx="464.2" cy="146.7" r="2.7" fill="#3a6e30" opacity="0.33"/>
<circle cx="365.2" cy="204.7" r="3.6" fill="#9cc46e" opacity="0.35"/>
<circle cx="420.8" cy="211.6" r="2.3" fill="#3a6e30" opacity="0.49"/>
<circle cx="277.7" cy="12.6" r="1.6" fill="#3a6e30" opacity="0.49"/>
<circle cx="423.6" cy="165.2" r="3.3" fill="#3a6e30" opacity="0.37"/>
<circle cx="475.1" cy="228.9" r="2.3" fill="#9cc46e" opacity="0.21"/>
<circle cx="358.7" cy="289.2" r="3.5" fill="#3a6e30" opacity="0.53"/>
<circle cx="356.9" cy="315.2" r="2.1" fill="#9cc46e" opacity="0.39"/>
<circle cx="604.9" cy="114.3" r="2.2" fill="#3a6e30" opacity="0.49"/>
<circle cx="106.1" cy="286.2" r="1.6" fill="#3a6e30" opacity="0.58"/>
<circle cx="338.2" cy="254.4" r="2.1" fill="#3a6e30" opacity="0.38"/>
<circle cx="600.7" cy="64.7" r="3.6" fill="#9cc46e" opacity="0.40"/>
<circle cx="212.0" cy="246.2" r="3.6" fill="#9cc46e" opacity="0.27"/>
<circle cx="398.5" cy="322.3" r="2.7" fill="#3a6e30" opacity="0.32"/>
<circle cx="409.6" cy="16.2" r="1.2" fill="#3a6e30" opacity="0.34"/>
<circle cx="335.5" cy="24.8" r="2.7" fill="#9cc46e" opacity="0.30"/>
<circle cx="383.3" cy="177.6" r="3.3" fill="#9cc46e" opacity="0.39"/>
<circle cx="373.5" cy="277.3" r="1.5" fill="#3a6e30" opacity="0.55"/>
<circle cx="520.1" cy="2.7" r="3.5" fill="#9cc46e" opacity="0.46"/>
<circle cx="448.0" cy="126.8" r="1.5" fill="#9cc46e" opacity="0.41"/>
<circle cx="322.9" cy="91.3" r="2.1" fill="#9cc46e" opacity="0.34"/>
<circle cx="181.8" cy="332.4" r="3.7" fill="#3a6e30" opacity="0.32"/>
<circle cx="463.5" cy="130.4" r="2.4" fill="#9cc46e" opacity="0.28"/>
<circle cx="390.2" cy="68.8" r="1.8" fill="#3a6e30" opacity="0.40"/>
<circle cx="552.8" cy="48.3" r="3.6" fill="#3a6e30" opacity="0.37"/>
<circle cx="125.6" cy="106.5" r="3.8" fill="#3a6e30" opacity="0.54"/>
<circle cx="597.2" cy="234.4" r="1.7" fill="#3a6e30" opacity="0.31"/>
<circle cx="203.3" cy="112.9" r="1.6" fill="#9cc46e" opacity="0.36"/>
<circle cx="225.7" cy="85.8" r="1.6" fill="#3a6e30" opacity="0.40"/>
<circle cx="108.6" cy="176.1" r="1.9" fill="#9cc46e" opacity="0.28"/>
<circle cx="532.0" cy="318.6" r="3.6" fill="#3a6e30" opacity="0.58"/>
<circle cx="323.7" cy="298.1" r="2.4" fill="#3a6e30" opacity="0.34"/>
<circle cx="478.5" cy="123.9" r="3.5" fill="#9cc46e" opacity="0.33"/>
<circle cx="84.9" cy="90.5" r="2.3" fill="#3a6e30" opacity="0.45"/>
<circle cx="70.8" cy="157.6" r="3.5" fill="#9cc46e" opacity="0.41"/>
<circle cx="440.1" cy="203.1" r="3.8" fill="#9cc46e" opacity="0.34"/>
<circle cx="336.6" cy="316.6" r="2.6" fill="#9cc46e" opacity="0.29"/>
<circle cx="428.0" cy="164.6" r="3.7" fill="#9cc46e" opacity="0.50"/>
<circle cx="583.3" cy="14.7" r="1.4" fill="#3a6e30" opacity="0.54"/>
<circle cx="370.6" cy="86.5" r="1.5" fill="#3a6e30" opacity="0.29"/>
<circle cx="145.8" cy="251.0" r="1.7" fill="#3a6e30" opacity="0.47"/>
<circle cx="138.7" cy="280.8" r="2.9" fill="#9cc46e" opacity="0.42"/>
<circle cx="464.0" cy="90.1" r="2.3" fill="#3a6e30" opacity="0.39"/>
<circle cx="562.5" cy="146.9" r="3.3" fill="#9cc46e" opacity="0.22"/>
<circle cx="182.1" cy="194.7" r="3.3" fill="#3a6e30" opacity="0.34"/>
<circle cx="272.3" cy="154.7" r="2.3" fill="#9cc46e" opacity="0.38"/>
<circle cx="218.8" cy="116.0" r="2.5" fill="#3a6e30" opacity="0.39"/>
<circle cx="103.2" cy="221.2" r="3.5" fill="#9cc46e" opacity="0.38"/>
<circle cx="276.5" cy="188.7" r="2.6" fill="#3a6e30" opacity="0.44"/>
<circle cx="337.5" cy="66.5" r="2.4" fill="#9cc46e" opacity="0.39"/>
<circle cx="246.3" cy="80.4" r="2.8" fill="#9cc46e" opacity="0.29"/>
<circle cx="323.3" cy="137.1" r="2.8" fill="#9cc46e" opacity="0.31"/>
<circle cx="359.6" cy="189.4" r="2.9" fill="#3a6e30" opacity="0.34"/>
<circle cx="568.0" cy="49.0" r="3.0" fill="#3a6e30" opacity="0.42"/>
<circle cx="312.6" cy="80.6" r="1.7" fill="#9cc46e" opacity="0.21"/>
<circle cx="145.3" cy="249.0" r="2.2" fill="#3a6e30" opacity="0.52"/>
<circle cx="600.0" cy="70.0" r="3.0" fill="#3a6e30" opacity="0.60"/>
<circle cx="391.4" cy="301.6" r="2.9" fill="#3a6e30" opacity="0.40"/>
<circle cx="450.3" cy="51.5" r="1.4" fill="#9cc46e" opacity="0.48"/>
<circle cx="420.7" cy="21.4" r="3.0" fill="#9cc46e" opacity="0.43"/>
<circle cx="455.7" cy="148.2" r="2.8" fill="#9cc46e" opacity="0.35"/>
<circle cx="108.4" cy="48.9" r="3.7" fill="#9cc46e" opacity="0.48"/>
<circle cx="148.2" cy="35.5" r="3.0" fill="#3a6e30" opacity="0.41"/>
<circle cx="194.1" cy="257.2" r="3.2" fill="#9cc46e" opacity="0.33"/>
<circle cx="334.0" cy="133.3" r="2.4" fill="#3a6e30" opacity="0.41"/>
<circle cx="589.6" cy="270.1" r="1.6" fill="#9cc46e" opacity="0.45"/>
<circle cx="254.9" cy="299.6" r="3.6" fill="#3a6e30" opacity="0.47"/>
<circle cx="274.3" cy="157.2" r="2.6" fill="#9cc46e" opacity="0.39"/>
<circle cx="549.5" cy="83.8" r="3.3" fill="#3a6e30" opacity="0.31"/>
<circle cx="503.3" cy="194.6" r="1.8" fill="#9cc46e" opacity="0.35"/>
<circle cx="433.3" cy="332.1" r="2.0" fill="#3a6e30" opacity="0.44"/>
<circle cx="222.7" cy="180.0" r="3.7" fill="#9cc46e" opacity="0.28"/>
<circle cx="438.4" cy="207.4" r="2.2" fill="#9cc46e" opacity="0.31"/>
<circle cx="491.4" cy="130.7" r="3.3" fill="#3a6e30" opacity="0.31"/>
<circle cx="246.5" cy="42.3" r="3.5" fill="#9cc46e" opacity="0.32"/>
<circle cx="198.2" cy="297.2" r="3.4" fill="#3a6e30" opacity="0.36"/>
<circle cx="337.6" cy="44.5" r="1.7" fill="#3a6e30" opacity="0.29"/>
<circle cx="146.3" cy="203.8" r="2.0" fill="#9cc46e" opacity="0.49"/>
<circle cx="431.2" cy="92.6" r="3.2" fill="#3a6e30" opacity="0.55"/>
<circle cx="297.6" cy="233.1" r="3.2" fill="#9cc46e" opacity="0.43"/>
<circle cx="253.5" cy="51.2" r="2.2" fill="#9cc46e" opacity="0.21"/>
<circle cx="220.9" cy="104.3" r="2.3" fill="#9cc46e" opacity="0.25"/>
<circle cx="124.5" cy="6.0" r="2.1" fill="#9cc46e" opacity="0.34"/>
<circle cx="418.1" cy="172.8" r="2.1" fill="#3a6e30" opacity="0.26"/>
<circle cx="584.0" cy="246.9" r="1.5" fill="#3a6e30" opacity="0.52"/>
<circle cx="343.1" cy="252.3" r="3.2" fill="#3a6e30" opacity="0.54"/>
<circle cx="177.0" cy="46.6" r="3.1" fill="#9cc46e" opacity="0.29"/>
<circle cx="276.9" cy="247.4" r="2.0" fill="#3a6e30" opacity="0.60"/>
<circle cx="138.3" cy="317.9" r="3.5" fill="#9cc46e" opacity="0.27"/>
<circle cx="175.4" cy="147.4" r="1.6" fill="#9cc46e" opacity="0.37"/>
<circle cx="524.3" cy="165.6" r="2.5" fill="#9cc46e" opacity="0.24"/>
<circle cx="190.3" cy="288.6" r="2.7" fill="#9cc46e" opacity="0.50"/>
<circle cx="486.4" cy="205.6" r="3.2" fill="#3a6e30" opacity="0.33"/>
<circle cx="244.3" cy="311.6" r="2.6" fill="#3a6e30" opacity="0.47"/>
<circle cx="606.5" cy="211.0" r="2.5" fill="#3a6e30" opacity="0.47"/>
<circle cx="401.3" cy="164.6" r="3.5" fill="#9cc46e" opacity="0.43"/>
<circle cx="461.2" cy="242.2" r="1.7" fill="#3a6e30" opacity="0.34"/>
<circle cx="179.0" cy="320.2" r="1.8" fill="#9cc46e" opacity="0.45"/>
<circle cx="287.4" cy="8.3" r="1.7" fill="#9cc46e" opacity="0.41"/>
<circle cx="260.3" cy="202.0" r="1.6" fill="#9cc46e" opacity="0.43"/>
<circle cx="492.2" cy="189.7" r="2.7" fill="#3a6e30" opacity="0.34"/>
<circle cx="288.3" cy="24.4" r="1.4" fill="#9cc46e" opacity="0.41"/>
<circle cx="372.8" cy="232.3" r="3.5" fill="#9cc46e" opacity="0.33"/>
<circle cx="280.7" cy="327.1" r="3.7" fill="#3a6e30" opacity="0.54"/>
<circle cx="416.3" cy="115.8" r="3.0" fill="#3a6e30" opacity="0.51"/>
<circle cx="371.0" cy="197.2" r="1.3" fill="#9cc46e" opacity="0.49"/>
<circle cx="480.5" cy="98.8" r="3.1" fill="#3a6e30" opacity="0.44"/>
<circle cx="255.2" cy="158.8" r="2.0" fill="#3a6e30" opacity="0.40"/>
<circle cx="196.7" cy="59.0" r="2.1" fill="#3a6e30" opacity="0.26"/>
<circle cx="595.8" cy="18.6" r="3.5" fill="#3a6e30" opacity="0.29"/>
<circle cx="300.5" cy="170.9" r="1.3" fill="#3a6e30" opacity="0.25"/>
<circle cx="229.9" cy="239.6" r="3.4" fill="#3a6e30" opacity="0.39"/>
<circle cx="581.5" cy="106.2" r="1.5" fill="#3a6e30" opacity="0.55"/>
<circle cx="254.8" cy="224.3" r="3.6" fill="#9cc46e" opacity="0.26"/>
<circle cx="328.6" cy="109.7" r="2.4" fill="#9cc46e" opacity="0.49"/>
<circle cx="441.3" cy="171.4" r="3.3" fill="#3a6e30" opacity="0.32"/>
<circle cx="431.3" cy="91.2" r="1.8" fill="#3a6e30" opacity="0.42"/>
<circle cx="85.5" cy="121.6" r="3.7" fill="#3a6e30" opacity="0.38"/>
<circle cx="315.6" cy="235.3" r="2.5" fill="#3a6e30" opacity="0.45"/>
<circle cx="217.3" cy="230.1" r="2.3" fill="#9cc46e" opacity="0.30"/>
<circle cx="414.0" cy="66.1" r="2.5" fill="#3a6e30" opacity="0.26"/>
<circle cx="136.5" cy="155.1" r="3.2" fill="#9cc46e" opacity="0.45"/>
<circle cx="504.9" cy="325.8" r="1.7" fill="#3a6e30" opacity="0.30"/>
<circle cx="497.6" cy="63.9" r="2.0" fill="#3a6e30" opacity="0.57"/>
<circle cx="181.5" cy="79.4" r="2.7" fill="#9cc46e" opacity="0.21"/>
<circle cx="382.3" cy="178.6" r="2.6" fill="#3a6e30" opacity="0.53"/>
<circle cx="513.8" cy="290.1" r="2.1" fill="#3a6e30" opacity="0.41"/>
<circle cx="82.4" cy="214.5" r="2.4" fill="#9cc46e" opacity="0.45"/>
<circle cx="465.0" cy="233.7" r="2.1" fill="#9cc46e" opacity="0.39"/>
<circle cx="186.7" cy="292.9" r="2.4" fill="#3a6e30" opacity="0.32"/>
<circle cx="518.5" cy="159.7" r="3.1" fill="#9cc46e" opacity="0.36"/>
<circle cx="385.2" cy="156.2" r="1.8" fill="#9cc46e" opacity="0.48"/>
<circle cx="86.8" cy="11.1" r="2.4" fill="#3a6e30" opacity="0.40"/>
<circle cx="253.3" cy="81.2" r="3.2" fill="#9cc46e" opacity="0.48"/>
<circle cx="173.4" cy="128.2" r="2.8" fill="#9cc46e" opacity="0.33"/>
<circle cx="168.8" cy="129.9" r="2.7" fill="#9cc46e" opacity="0.40"/>
<circle cx="525.7" cy="281.0" r="2.3" fill="#3a6e30" opacity="0.54"/>
<circle cx="460.0" cy="134.7" r="1.7" fill="#9cc46e" opacity="0.29"/>
<circle cx="211.5" cy="84.5" r="3.0" fill="#9cc46e" opacity="0.48"/>
<circle cx="387.5" cy="162.9" r="3.5" fill="#3a6e30" opacity="0.46"/>
<circle cx="603.1" cy="112.2" r="1.6" fill="#3a6e30" opacity="0.26"/>
<circle cx="464.9" cy="139.0" r="3.3" fill="#9cc46e" opacity="0.21"/>
<circle cx="234.2" cy="88.9" r="1.9" fill="#3a6e30" opacity="0.34"/>
<circle cx="252.2" cy="152.5" r="2.6" fill="#9cc46e" opacity="0.23"/>
<circle cx="140.7" cy="304.4" r="1.9" fill="#3a6e30" opacity="0.36"/>
<circle cx="553.3" cy="314.8" r="2.7" fill="#3a6e30" opacity="0.38"/>
<circle cx="449.6" cy="190.7" r="1.9" fill="#3a6e30" opacity="0.27"/>
<circle cx="286.7" cy="277.9" r="2.2" fill="#3a6e30" opacity="0.31"/>
<circle cx="454.3" cy="140.5" r="2.2" fill="#9cc46e" opacity="0.29"/>
<circle cx="110.1" cy="216.4" r="3.1" fill="#3a6e30" opacity="0.37"/>
<circle cx="548.2" cy="171.5" r="2.3" fill="#3a6e30" opacity="0.35"/>
<circle cx="386.2" cy="308.4" r="2.9" fill="#9cc46e" opacity="0.32"/>
<circle cx="105.4" cy="114.9" r="2.2" fill="#3a6e30" opacity="0.28"/>
<circle cx="561.8" cy="301.7" r="1.5" fill="#3a6e30" opacity="0.59"/>
<circle cx="158.4" cy="101.6" r="1.8" fill="#3a6e30" opacity="0.26"/>
<circle cx="318.4" cy="261.4" r="1.4" fill="#3a6e30" opacity="0.30"/>
<circle cx="494.9" cy="304.8" r="3.5" fill="#3a6e30" opacity="0.30"/>
<circle cx="456.8" cy="23.5" r="3.2" fill="#3a6e30" opacity="0.56"/>
<circle cx="222.4" cy="249.4" r="2.5" fill="#3a6e30" opacity="0.42"/>
<circle cx="301.4" cy="52.5" r="2.6" fill="#3a6e30" opacity="0.49"/>
<circle cx="252.1" cy="207.1" r="1.7" fill="#3a6e30" opacity="0.33"/>
<circle cx="493.9" cy="64.3" r="2.0" fill="#3a6e30" opacity="0.35"/>
<circle cx="361.3" cy="76.9" r="1.5" fill="#9cc46e" opacity="0.29"/>
<circle cx="185.0" cy="134.5" r="3.4" fill="#9cc46e" opacity="0.47"/>
<circle cx="363.7" cy="112.8" r="2.5" fill="#3a6e30" opacity="0.49"/>
<circle cx="522.7" cy="308.6" r="3.4" fill="#9cc46e" opacity="0.44"/>
<circle cx="226.0" cy="189.4" r="1.6" fill="#9cc46e" opacity="0.35"/>
<circle cx="163.6" cy="331.7" r="2.8" fill="#3a6e30" opacity="0.55"/>
<circle cx="407.4" cy="209.8" r="3.5" fill="#3a6e30" opacity="0.35"/>
<circle cx="377.1" cy="68.5" r="3.0" fill="#3a6e30" opacity="0.32"/>
<circle cx="135.5" cy="54.6" r="2.7" fill="#9cc46e" opacity="0.44"/>
<circle cx="527.8" cy="191.0" r="3.3" fill="#3a6e30" opacity="0.38"/>
<circle cx="557.7" cy="87.1" r="2.8" fill="#9cc46e" opacity="0.22"/>
<circle cx="374.9" cy="268.6" r="3.5" fill="#3a6e30" opacity="0.56"/>
<circle cx="88.6" cy="305.6" r="3.0" fill="#9cc46e" opacity="0.33"/>
<circle cx="386.4" cy="278.2" r="1.8" fill="#3a6e30" opacity="0.51"/>
<circle cx="542.8" cy="76.7" r="2.6" fill="#3a6e30" opacity="0.36"/>
<circle cx="524.9" cy="95.3" r="3.2" fill="#3a6e30" opacity="0.30"/>
<circle cx="589.4" cy="49.7" r="1.5" fill="#3a6e30" opacity="0.37"/>
<circle cx="82.5" cy="52.3" r="3.6" fill="#3a6e30" opacity="0.50"/>
<circle cx="183.6" cy="4.5" r="1.2" fill="#3a6e30" opacity="0.58"/>
<circle cx="315.6" cy="84.1" r="1.3" fill="#9cc46e" opacity="0.29"/>
<circle cx="165.7" cy="147.3" r="3.0" fill="#3a6e30" opacity="0.45"/>
<circle cx="170.1" cy="188.4" r="1.3" fill="#9cc46e" opacity="0.48"/>
<circle cx="380.1" cy="159.7" r="2.2" fill="#9cc46e" opacity="0.37"/>
<circle cx="452.6" cy="149.3" r="2.2" fill="#9cc46e" opacity="0.25"/>
<circle cx="253.4" cy="81.0" r="1.7" fill="#9cc46e" opacity="0.29"/>
<circle cx="467.3" cy="16.4" r="3.6" fill="#3a6e30" opacity="0.51"/>
<circle cx="125.5" cy="203.4" r="3.3" fill="#3a6e30" opacity="0.28"/>
<circle cx="275.6" cy="259.2" r="3.2" fill="#3a6e30" opacity="0.36"/>
<circle cx="564.2" cy="97.3" r="1.4" fill="#9cc46e" opacity="0.45"/>
<circle cx="309.5" cy="234.8" r="3.2" fill="#9cc46e" opacity="0.26"/>
<circle cx="463.7" cy="311.2" r="3.3" fill="#3a6e30" opacity="0.39"/>
<circle cx="598.9" cy="334.7" r="3.3" fill="#3a6e30" opacity="0.56"/>
<circle cx="541.9" cy="170.0" r="1.5" fill="#9cc46e" opacity="0.24"/>
<circle cx="249.5" cy="191.6" r="2.5" fill="#9cc46e" opacity="0.45"/>
<circle cx="582.1" cy="104.6" r="3.7" fill="#3a6e30" opacity="0.37"/>
<circle cx="477.8" cy="328.8" r="2.5" fill="#9cc46e" opacity="0.45"/>
<circle cx="238.7" cy="208.0" r="3.6" fill="#3a6e30" opacity="0.29"/>
<circle cx="540.9" cy="190.8" r="2.3" fill="#9cc46e" opacity="0.33"/>
<circle cx="143.3" cy="118.0" r="3.2" fill="#9cc46e" opacity="0.35"/>
<circle cx="74.1" cy="335.8" r="1.4" fill="#3a6e30" opacity="0.53"/>
<circle cx="576.2" cy="231.8" r="2.2" fill="#9cc46e" opacity="0.40"/>
<circle cx="381.5" cy="264.7" r="2.6" fill="#3a6e30" opacity="0.34"/>
<circle cx="489.4" cy="36.1" r="1.4" fill="#9cc46e" opacity="0.21"/>
<circle cx="542.1" cy="65.0" r="2.4" fill="#3a6e30" opacity="0.42"/>
<circle cx="402.0" cy="66.3" r="2.6" fill="#9cc46e" opacity="0.24"/>
<circle cx="186.4" cy="65.8" r="1.5" fill="#3a6e30" opacity="0.59"/>
<circle cx="590.0" cy="13.2" r="3.4" fill="#9cc46e" opacity="0.26"/>
<circle cx="546.3" cy="39.2" r="2.9" fill="#9cc46e" opacity="0.41"/>
<circle cx="196.4" cy="50.4" r="2.8" fill="#3a6e30" opacity="0.46"/>
<circle cx="468.8" cy="11.0" r="3.1" fill="#9cc46e" opacity="0.32"/>
<circle cx="379.5" cy="111.1" r="3.5" fill="#3a6e30" opacity="0.28"/>
<circle cx="340.5" cy="149.7" r="2.7" fill="#3a6e30" opacity="0.57"/>
<circle cx="357.7" cy="131.1" r="3.1" fill="#3a6e30" opacity="0.57"/>
<circle cx="520.3" cy="86.5" r="2.4" fill="#3a6e30" opacity="0.53"/>
<circle cx="595.6" cy="200.9" r="3.7" fill="#3a6e30" opacity="0.55"/>
<circle cx="525.3" cy="312.0" r="2.4" fill="#3a6e30" opacity="0.26"/>
<circle cx="583.6" cy="29.7" r="2.7" fill="#9cc46e" opacity="0.25"/>
<circle cx="257.9" cy="101.1" r="1.2" fill="#3a6e30" opacity="0.38"/>
<circle cx="457.3" cy="235.7" r="3.7" fill="#9cc46e" opacity="0.28"/>
<circle cx="399.2" cy="233.5" r="3.3" fill="#3a6e30" opacity="0.37"/>
<circle cx="400.8" cy="106.2" r="3.6" fill="#3a6e30" opacity="0.50"/>
<circle cx="105.1" cy="302.6" r="3.7" fill="#9cc46e" opacity="0.30"/>
<circle cx="519.7" cy="331.3" r="1.5" fill="#3a6e30" opacity="0.48"/>
<circle cx="603.7" cy="10.3" r="3.4" fill="#9cc46e" opacity="0.34"/>
<circle cx="145.3" cy="170.9" r="2.5" fill="#3a6e30" opacity="0.57"/>
<circle cx="469.0" cy="55.9" r="2.8" fill="#9cc46e" opacity="0.48"/>
<circle cx="599.9" cy="299.8" r="1.3" fill="#3a6e30" opacity="0.30"/>
<circle cx="475.0" cy="27.8" r="3.4" fill="#9cc46e" opacity="0.39"/>
<circle cx="580.1" cy="292.9" r="3.1" fill="#9cc46e" opacity="0.36"/>
<circle cx="348.7" cy="9.7" r="1.7" fill="#9cc46e" opacity="0.32"/>
<circle cx="312.4" cy="285.1" r="2.2" fill="#9cc46e" opacity="0.44"/>
<circle cx="518.9" cy="79.1" r="2.8" fill="#3a6e30" opacity="0.46"/>
<circle cx="114.8" cy="64.0" r="1.8" fill="#9cc46e" opacity="0.43"/>
<circle cx="275.6" cy="204.1" r="2.3" fill="#3a6e30" opacity="0.34"/>
<circle cx="254.4" cy="322.8" r="3.5" fill="#3a6e30" opacity="0.29"/>
<circle cx="536.8" cy="149.4" r="2.9" fill="#9cc46e" opacity="0.38"/>
<circle cx="559.1" cy="51.8" r="3.4" fill="#3a6e30" opacity="0.28"/>
<circle cx="228.9" cy="173.5" r="3.3" fill="#9cc46e" opacity="0.49"/>
<circle cx="170.5" cy="127.8" r="2.7" fill="#9cc46e" opacity="0.41"/>
<circle cx="342.4" cy="33.9" r="3.2" fill="#9cc46e" opacity="0.22"/>
<circle cx="508.7" cy="2.0" r="3.0" fill="#9cc46e" opacity="0.29"/>
<circle cx="116.6" cy="86.8" r="2.8" fill="#3a6e30" opacity="0.53"/>
<circle cx="161.1" cy="209.1" r="2.0" fill="#3a6e30" opacity="0.32"/>
<circle cx="128.1" cy="53.7" r="1.3" fill="#9cc46e" opacity="0.31"/>
<circle cx="478.5" cy="142.3" r="2.5" fill="#3a6e30" opacity="0.58"/>
<circle cx="182.6" cy="323.5" r="3.2" fill="#9cc46e" opacity="0.23"/>
<circle cx="602.8" cy="220.0" r="2.7" fill="#9cc46e" opacity="0.33"/>
<circle cx="584.8" cy="330.6" r="3.7" fill="#3a6e30" opacity="0.44"/>
<circle cx="447.6" cy="61.8" r="3.5" fill="#9cc46e" opacity="0.24"/>
<circle cx="228.8" cy="229.4" r="3.5" fill="#9cc46e" opacity="0.28"/>
<circle cx="521.1" cy="197.6" r="2.1" fill="#3a6e30" opacity="0.29"/>
<circle cx="86.8" cy="145.0" r="1.5" fill="#3a6e30" opacity="0.36"/>
<circle cx="141.6" cy="68.0" r="1.9" fill="#9cc46e" opacity="0.33"/>
<circle cx="402.7" cy="182.3" r="3.7" fill="#9cc46e" opacity="0.48"/>
<circle cx="540.4" cy="248.7" r="3.5" fill="#3a6e30" opacity="0.46"/>
<circle cx="247.4" cy="311.9" r="1.9" fill="#9cc46e" opacity="0.27"/>
<circle cx="252.2" cy="250.2" r="2.7" fill="#3a6e30" opacity="0.29"/>
<circle cx="542.7" cy="69.8" r="2.5" fill="#9cc46e" opacity="0.35"/>
<circle cx="326.5" cy="55.3" r="3.6" fill="#9cc46e" opacity="0.40"/>
<circle cx="281.2" cy="239.8" r="2.2" fill="#3a6e30" opacity="0.37"/>
<circle cx="480.9" cy="291.1" r="2.5" fill="#9cc46e" opacity="0.48"/>
<circle cx="420.3" cy="328.9" r="1.9" fill="#9cc46e" opacity="0.43"/>
<circle cx="377.2" cy="199.7" r="1.6" fill="#3a6e30" opacity="0.26"/>
<circle cx="550.9" cy="134.2" r="2.8" fill="#3a6e30" opacity="0.56"/>
<circle cx="467.5" cy="126.1" r="2.9" fill="#3a6e30" opacity="0.58"/>
<circle cx="154.8" cy="307.2" r="2.6" fill="#3a6e30" opacity="0.59"/>
<circle cx="175.8" cy="228.6" r="1.9" fill="#3a6e30" opacity="0.53"/>
<circle cx="550.5" cy="300.6" r="2.9" fill="#9cc46e" opacity="0.25"/>
<circle cx="608.9" cy="110.4" r="2.9" fill="#3a6e30" opacity="0.36"/>
<circle cx="351.4" cy="159.6" r="2.3" fill="#3a6e30" opacity="0.26"/>
<circle cx="418.2" cy="119.5" r="1.5" fill="#3a6e30" opacity="0.48"/>
<circle cx="471.1" cy="140.1" r="1.5" fill="#9cc46e" opacity="0.38"/>
<circle cx="330.1" cy="326.8" r="2.2" fill="#3a6e30" opacity="0.26"/>
<circle cx="140.0" cy="65.5" r="1.7" fill="#3a6e30" opacity="0.29"/>
<circle cx="566.3" cy="197.9" r="2.5" fill="#9cc46e" opacity="0.28"/>
<circle cx="537.6" cy="248.0" r="2.3" fill="#3a6e30" opacity="0.25"/>
<circle cx="87.1" cy="244.6" r="1.3" fill="#3a6e30" opacity="0.43"/>
<circle cx="268.9" cy="100.2" r="3.6" fill="#9cc46e" opacity="0.43"/>
<circle cx="359.2" cy="320.8" r="3.0" fill="#3a6e30" opacity="0.30"/>
<circle cx="147.0" cy="35.0" r="2.2" fill="#9cc46e" opacity="0.26"/>
<circle cx="112.1" cy="113.6" r="2.4" fill="#9cc46e" opacity="0.47"/>
<circle cx="513.4" cy="87.7" r="3.3" fill="#3a6e30" opacity="0.45"/>
<circle cx="357.7" cy="78.5" r="2.6" fill="#3a6e30" opacity="0.53"/>
<circle cx="195.4" cy="263.4" r="1.7" fill="#3a6e30" opacity="0.40"/>
<circle cx="545.9" cy="214.0" r="1.9" fill="#3a6e30" opacity="0.37"/>
<circle cx="427.1" cy="97.1" r="1.6" fill="#9cc46e" opacity="0.21"/>
<circle cx="141.7" cy="107.6" r="2.1" fill="#9cc46e" opacity="0.35"/>
<circle cx="152.0" cy="279.6" r="3.0" fill="#3a6e30" opacity="0.31"/>
<circle cx="128.7" cy="172.3" r="2.9" fill="#9cc46e" opacity="0.27"/>
<circle cx="537.1" cy="303.9" r="2.4" fill="#3a6e30" opacity="0.31"/>
<circle cx="458.0" cy="22.4" r="2.8" fill="#9cc46e" opacity="0.21"/>
<circle cx="147.7" cy="81.2" r="2.3" fill="#9cc46e" opacity="0.44"/>
<circle cx="278.9" cy="4.0" r="2.6" fill="#3a6e30" opacity="0.35"/>
<circle cx="573.1" cy="97.0" r="2.2" fill="#9cc46e" opacity="0.48"/>
<circle cx="101.1" cy="198.8" r="2.9" fill="#3a6e30" opacity="0.29"/>
<circle cx="248.7" cy="114.2" r="3.0" fill="#9cc46e" opacity="0.40"/>
<circle cx="300.9" cy="336.0" r="3.6" fill="#3a6e30" opacity="0.41"/>
<circle cx="348.5" cy="35.5" r="2.9" fill="#9cc46e" opacity="0.34"/>
<circle cx="384.8" cy="306.2" r="2.8" fill="#9cc46e" opacity="0.46"/>
<circle cx="465.8" cy="154.3" r="3.7" fill="#9cc46e" opacity="0.22"/>
<circle cx="610.0" cy="56.2" r="3.5" fill="#9cc46e" opacity="0.43"/>
<circle cx="255.7" cy="96.5" r="1.7" fill="#3a6e30" opacity="0.29"/>
<circle cx="159.9" cy="276.3" r="2.6" fill="#9cc46e" opacity="0.50"/>
<circle cx="306.3" cy="59.5" r="3.5" fill="#3a6e30" opacity="0.43"/>
<circle cx="525.9" cy="42.0" r="1.9" fill="#9cc46e" opacity="0.23"/>
<circle cx="537.0" cy="251.9" r="2.6" fill="#9cc46e" opacity="0.24"/>
<circle cx="527.1" cy="181.5" r="2.2" fill="#9cc46e" opacity="0.34"/>
<circle cx="91.3" cy="235.4" r="1.3" fill="#9cc46e" opacity="0.27"/>
<circle cx="290.9" cy="141.3" r="3.0" fill="#9cc46e" opacity="0.31"/>
<circle cx="192.2" cy="262.2" r="1.4" fill="#9cc46e" opacity="0.42"/>
<circle cx="408.6" cy="8.9" r="1.4" fill="#9cc46e" opacity="0.44"/>
<circle cx="411.3" cy="331.9" r="3.0" fill="#3a6e30" opacity="0.59"/>
<circle cx="196.8" cy="37.5" r="2.2" fill="#3a6e30" opacity="0.45"/>
<circle cx="357.3" cy="63.6" r="2.8" fill="#3a6e30" opacity="0.49"/>
<circle cx="496.4" cy="269.2" r="3.0" fill="#3a6e30" opacity="0.45"/>
<circle cx="429.5" cy="65.9" r="2.2" fill="#3a6e30" opacity="0.34"/>
<circle cx="112.6" cy="96.3" r="2.3" fill="#9cc46e" opacity="0.50"/>
<circle cx="526.5" cy="300.9" r="3.8" fill="#3a6e30" opacity="0.47"/>
<circle cx="83.6" cy="242.8" r="3.4" fill="#3a6e30" opacity="0.46"/>
<circle cx="120.2" cy="315.9" r="2.3" fill="#3a6e30" opacity="0.33"/>
<circle cx="539.8" cy="321.2" r="2.3" fill="#3a6e30" opacity="0.35"/>
<circle cx="449.0" cy="208.8" r="3.4" fill="#3a6e30" opacity="0.43"/>
<circle cx="593.3" cy="8.2" r="2.8" fill="#3a6e30" opacity="0.29"/>
<circle cx="230.7" cy="324.5" r="1.8" fill="#3a6e30" opacity="0.55"/>
<circle cx="127.3" cy="7.5" r="2.8" fill="#9cc46e" opacity="0.21"/>
<circle cx="522.3" cy="258.7" r="2.7" fill="#3a6e30" opacity="0.57"/>
<circle cx="187.5" cy="336.8" r="2.6" fill="#9cc46e" opacity="0.36"/>
<circle cx="396.3" cy="317.3" r="2.3" fill="#3a6e30" opacity="0.59"/>
<circle cx="606.9" cy="43.0" r="3.4" fill="#9cc46e" opacity="0.26"/>
<circle cx="194.5" cy="19.5" r="3.4" fill="#3a6e30" opacity="0.54"/>
<circle cx="499.1" cy="332.5" r="1.5" fill="#9cc46e" opacity="0.22"/>
<circle cx="128.2" cy="285.1" r="1.6" fill="#9cc46e" opacity="0.50"/>
<circle cx="329.6" cy="142.4" r="3.5" fill="#9cc46e" opacity="0.50"/>
<circle cx="442.6" cy="150.4" r="1.3" fill="#9cc46e" opacity="0.43"/>
<circle cx="143.2" cy="232.8" r="1.9" fill="#3a6e30" opacity="0.31"/>
<circle cx="112.8" cy="157.6" r="3.1" fill="#9cc46e" opacity="0.46"/>
<circle cx="562.5" cy="251.2" r="1.8" fill="#9cc46e" opacity="0.42"/>
<circle cx="130.8" cy="5.0" r="3.6" fill="#3a6e30" opacity="0.55"/>
<circle cx="581.2" cy="141.4" r="2.6" fill="#3a6e30" opacity="0.28"/>
<circle cx="529.0" cy="210.0" r="1.9" fill="#3a6e30" opacity="0.28"/>
<circle cx="482.9" cy="91.7" r="1.3" fill="#9cc46e" opacity="0.29"/>
<circle cx="159.7" cy="190.6" r="2.2" fill="#3a6e30" opacity="0.41"/>
<circle cx="361.2" cy="89.9" r="2.5" fill="#9cc46e" opacity="0.26"/>
<circle cx="294.9" cy="155.8" r="2.4" fill="#3a6e30" opacity="0.47"/>
<circle cx="573.9" cy="50.6" r="2.4" fill="#9cc46e" opacity="0.20"/>
<circle cx="443.7" cy="123.9" r="2.5" fill="#9cc46e" opacity="0.28"/>
<circle cx="103.9" cy="215.5" r="3.8" fill="#3a6e30" opacity="0.58"/>
<circle cx="346.4" cy="228.9" r="2.9" fill="#9cc46e" opacity="0.40"/>
<circle cx="439.7" cy="240.0" r="1.9" fill="#9cc46e" opacity="0.38"/>
<circle cx="339.8" cy="212.8" r="2.1" fill="#3a6e30" opacity="0.57"/>
<circle cx="182.9" cy="120.5" r="2.7" fill="#3a6e30" opacity="0.28"/>
<circle cx="215.5" cy="258.2" r="1.6" fill="#3a6e30" opacity="0.29"/>
<circle cx="109.4" cy="329.7" r="2.3" fill="#3a6e30" opacity="0.28"/>
<circle cx="155.1" cy="173.8" r="3.6" fill="#9cc46e" opacity="0.32"/>
<circle cx="345.5" cy="74.4" r="3.4" fill="#3a6e30" opacity="0.36"/>
<circle cx="171.9" cy="249.1" r="3.5" fill="#3a6e30" opacity="0.37"/>
<circle cx="564.8" cy="33.4" r="3.2" fill="#3a6e30" opacity="0.57"/>
<circle cx="207.1" cy="293.7" r="3.4" fill="#3a6e30" opacity="0.32"/>
<circle cx="410.9" cy="25.5" r="2.7" fill="#3a6e30" opacity="0.48"/>
<circle cx="125.1" cy="232.2" r="1.9" fill="#9cc46e" opacity="0.42"/>
<circle cx="158.6" cy="109.7" r="3.1" fill="#9cc46e" opacity="0.47"/>
<circle cx="83.9" cy="131.3" r="2.1" fill="#9cc46e" opacity="0.35"/>
<circle cx="245.8" cy="53.7" r="2.4" fill="#3a6e30" opacity="0.26"/>
<circle cx="409.3" cy="299.6" r="2.3" fill="#3a6e30" opacity="0.56"/>
<circle cx="585.5" cy="323.7" r="3.1" fill="#3a6e30" opacity="0.38"/>
<circle cx="252.0" cy="270.2" r="3.2" fill="#9cc46e" opacity="0.25"/>
<circle cx="190.8" cy="334.7" r="2.1" fill="#9cc46e" opacity="0.33"/>
<circle cx="456.9" cy="1.7" r="3.3" fill="#9cc46e" opacity="0.41"/>
<circle cx="258.7" cy="233.6" r="1.7" fill="#9cc46e" opacity="0.44"/>
<circle cx="389.7" cy="253.4" r="3.0" fill="#9cc46e" opacity="0.47"/>
<circle cx="479.7" cy="306.9" r="3.1" fill="#3a6e30" opacity="0.32"/>
<circle cx="561.5" cy="29.8" r="3.5" fill="#9cc46e" opacity="0.24"/>
<circle cx="548.4" cy="241.3" r="1.8" fill="#3a6e30" opacity="0.49"/>
<circle cx="406.5" cy="196.4" r="3.4" fill="#3a6e30" opacity="0.55"/>
<circle cx="591.1" cy="286.7" r="2.3" fill="#3a6e30" opacity="0.43"/>
<circle cx="283.3" cy="224.8" r="1.4" fill="#3a6e30" opacity="0.28"/>
<circle cx="134.6" cy="104.7" r="2.6" fill="#9cc46e" opacity="0.31"/>
<circle cx="548.9" cy="167.5" r="3.7" fill="#3a6e30" opacity="0.36"/>
<circle cx="155.5" cy="266.3" r="2.7" fill="#9cc46e" opacity="0.35"/>
<circle cx="482.5" cy="55.4" r="3.6" fill="#3a6e30" opacity="0.32"/>
<circle cx="604.3" cy="23.8" r="3.7" fill="#9cc46e" opacity="0.22"/>
<circle cx="295.4" cy="267.2" r="3.7" fill="#3a6e30" opacity="0.57"/>
<circle cx="298.0" cy="251.5" r="1.4" fill="#9cc46e" opacity="0.26"/>
<circle cx="459.7" cy="95.2" r="1.3" fill="#3a6e30" opacity="0.33"/>
<circle cx="342.4" cy="2.3" r="2.3" fill="#3a6e30" opacity="0.38"/>
<circle cx="398.9" cy="249.2" r="2.5" fill="#3a6e30" opacity="0.35"/>
<circle cx="397.9" cy="249.7" r="1.8" fill="#3a6e30" opacity="0.50"/>
<circle cx="212.7" cy="255.0" r="2.6" fill="#3a6e30" opacity="0.37"/>
<circle cx="573.3" cy="281.0" r="2.9" fill="#9cc46e" opacity="0.50"/>
<circle cx="493.3" cy="294.2" r="2.5" fill="#9cc46e" opacity="0.29"/>
<circle cx="579.3" cy="330.7" r="3.3" fill="#9cc46e" opacity="0.40"/>
<circle cx="436.4" cy="37.7" r="3.1" fill="#3a6e30" opacity="0.57"/>
<circle cx="504.6" cy="295.2" r="3.1" fill="#3a6e30" opacity="0.46"/>
<circle cx="333.1" cy="295.4" r="2.8" fill="#3a6e30" opacity="0.50"/>
<circle cx="490.4" cy="214.1" r="2.2" fill="#9cc46e" opacity="0.37"/>
<circle cx="125.4" cy="91.3" r="1.6" fill="#3a6e30" opacity="0.29"/>
<circle cx="482.2" cy="199.1" r="1.6" fill="#9cc46e" opacity="0.44"/>
<circle cx="85.8" cy="247.2" r="2.4" fill="#9cc46e" opacity="0.48"/>
<circle cx="403.0" cy="268.2" r="1.7" fill="#9cc46e" opacity="0.41"/>
<circle cx="473.6" cy="152.1" r="1.8" fill="#3a6e30" opacity="0.31"/>
<circle cx="426.4" cy="228.7" r="2.8" fill="#9cc46e" opacity="0.29"/>
<circle cx="396.7" cy="268.7" r="2.8" fill="#3a6e30" opacity="0.35"/>
<circle cx="236.4" cy="105.3" r="3.0" fill="#3a6e30" opacity="0.32"/>
<circle cx="582.1" cy="195.6" r="3.6" fill="#3a6e30" opacity="0.29"/>
<circle cx="106.4" cy="307.3" r="1.3" fill="#3a6e30" opacity="0.46"/>
<circle cx="289.9" cy="13.1" r="2.1" fill="#9cc46e" opacity="0.25"/>
<circle cx="271.1" cy="82.6" r="2.5" fill="#9cc46e" opacity="0.38"/>
<circle cx="477.4" cy="275.2" r="1.2" fill="#3a6e30" opacity="0.54"/>
<circle cx="334.4" cy="140.4" r="3.4" fill="#3a6e30" opacity="0.42"/>
<circle cx="501.4" cy="238.8" r="1.4" fill="#3a6e30" opacity="0.55"/>
<circle cx="400.5" cy="133.4" r="3.5" fill="#3a6e30" opacity="0.56"/>
<circle cx="215.7" cy="206.9" r="2.2" fill="#3a6e30" opacity="0.48"/>
<circle cx="347.0" cy="109.7" r="2.0" fill="#3a6e30" opacity="0.47"/>
<circle cx="592.4" cy="245.1" r="3.7" fill="#3a6e30" opacity="0.26"/>
<circle cx="151.9" cy="283.0" r="1.5" fill="#9cc46e" opacity="0.50"/>
<circle cx="494.5" cy="165.1" r="1.7" fill="#9cc46e" opacity="0.26"/>
<circle cx="71.6" cy="161.3" r="3.6" fill="#9cc46e" opacity="0.35"/>
<circle cx="90.0" cy="156.8" r="2.3" fill="#9cc46e" opacity="0.31"/>
<circle cx="288.4" cy="288.1" r="3.3" fill="#3a6e30" opacity="0.44"/>
<circle cx="92.2" cy="169.4" r="1.2" fill="#9cc46e" opacity="0.32"/>
<circle cx="573.1" cy="170.6" r="1.6" fill="#9cc46e" opacity="0.32"/>
<circle cx="369.3" cy="244.9" r="2.2" fill="#3a6e30" opacity="0.27"/>
<circle cx="235.4" cy="24.5" r="2.5" fill="#3a6e30" opacity="0.32"/>
<circle cx="263.7" cy="3.4" r="3.7" fill="#9cc46e" opacity="0.29"/>
<circle cx="604.9" cy="246.0" r="2.5" fill="#3a6e30" opacity="0.50"/>
<circle cx="517.3" cy="266.0" r="2.4" fill="#9cc46e" opacity="0.27"/>
<circle cx="497.4" cy="330.5" r="1.3" fill="#3a6e30" opacity="0.49"/>
<circle cx="433.9" cy="47.2" r="1.3" fill="#9cc46e" opacity="0.50"/>
<circle cx="562.1" cy="21.2" r="3.1" fill="#3a6e30" opacity="0.38"/>
<circle cx="231.2" cy="239.4" r="2.2" fill="#3a6e30" opacity="0.26"/>
<circle cx="94.8" cy="142.2" r="3.1" fill="#9cc46e" opacity="0.49"/>
<circle cx="547.9" cy="301.3" r="2.6" fill="#3a6e30" opacity="0.49"/>
<circle cx="411.6" cy="58.7" r="2.6" fill="#3a6e30" opacity="0.42"/>
<circle cx="332.9" cy="171.1" r="2.8" fill="#3a6e30" opacity="0.30"/>
<circle cx="608.1" cy="253.4" r="1.9" fill="#9cc46e" opacity="0.44"/>
<circle cx="247.1" cy="95.8" r="1.7" fill="#3a6e30" opacity="0.34"/>
<circle cx="561.7" cy="327.2" r="2.8" fill="#9cc46e" opacity="0.22"/>
<circle cx="364.5" cy="327.1" r="1.9" fill="#3a6e30" opacity="0.58"/>
<circle cx="397.9" cy="315.2" r="1.4" fill="#9cc46e" opacity="0.38"/>
<circle cx="537.5" cy="105.9" r="1.3" fill="#9cc46e" opacity="0.30"/>
<circle cx="153.0" cy="52.2" r="1.4" fill="#9cc46e" opacity="0.43"/>
<circle cx="117.9" cy="64.3" r="3.3" fill="#3a6e30" opacity="0.46"/>
<circle cx="169.6" cy="275.5" r="2.7" fill="#3a6e30" opacity="0.37"/>
<circle cx="431.2" cy="80.0" r="1.5" fill="#3a6e30" opacity="0.26"/>
<circle cx="99.5" cy="38.6" r="2.0" fill="#9cc46e" opacity="0.47"/>
<circle cx="282.1" cy="249.3" r="3.3" fill="#9cc46e" opacity="0.27"/>
<circle cx="447.6" cy="302.2" r="3.1" fill="#3a6e30" opacity="0.54"/>
<circle cx="484.6" cy="201.4" r="1.3" fill="#3a6e30" opacity="0.25"/>
<circle cx="368.0" cy="201.6" r="1.5" fill="#9cc46e" opacity="0.32"/>
<circle cx="143.2" cy="197.4" r="1.9" fill="#3a6e30" opacity="0.32"/>
<circle cx="495.1" cy="33.3" r="1.8" fill="#3a6e30" opacity="0.48"/>
<circle cx="435.1" cy="144.3" r="1.6" fill="#3a6e30" opacity="0.57"/>
<circle cx="394.5" cy="20.4" r="2.9" fill="#9cc46e" opacity="0.26"/>
<circle cx="580.0" cy="56.8" r="2.3" fill="#3a6e30" opacity="0.59"/>
<circle cx="328.3" cy="248.6" r="3.1" fill="#3a6e30" opacity="0.41"/>
<circle cx="317.8" cy="111.7" r="1.7" fill="#3a6e30" opacity="0.60"/>
<circle cx="570.1" cy="54.2" r="3.8" fill="#3a6e30" opacity="0.52"/>
<circle cx="321.4" cy="159.1" r="2.3" fill="#3a6e30" opacity="0.43"/>
<circle cx="205.4" cy="310.0" r="2.8" fill="#3a6e30" opacity="0.54"/>
<circle cx="384.0" cy="214.1" r="3.1" fill="#9cc46e" opacity="0.26"/>
<circle cx="538.5" cy="250.2" r="3.2" fill="#9cc46e" opacity="0.27"/>
<circle cx="599.7" cy="245.0" r="3.6" fill="#3a6e30" opacity="0.36"/>
<circle cx="545.5" cy="336.3" r="3.0" fill="#3a6e30" opacity="0.35"/>
<circle cx="362.2" cy="3.0" r="2.1" fill="#9cc46e" opacity="0.48"/>
<circle cx="441.8" cy="300.7" r="1.7" fill="#9cc46e" opacity="0.27"/>
<circle cx="204.5" cy="221.7" r="1.8" fill="#3a6e30" opacity="0.50"/>
<circle cx="102.9" cy="215.5" r="1.5" fill="#3a6e30" opacity="0.56"/>
<circle cx="294.7" cy="68.8" r="3.5" fill="#9cc46e" opacity="0.34"/>
<circle cx="468.2" cy="82.4" r="1.3" fill="#3a6e30" opacity="0.46"/>
<circle cx="493.0" cy="48.8" r="1.6" fill="#3a6e30" opacity="0.34"/>
<circle cx="258.3" cy="252.5" r="2.1" fill="#9cc46e" opacity="0.40"/>
<circle cx="563.9" cy="198.5" r="3.7" fill="#3a6e30" opacity="0.44"/>
<circle cx="176.3" cy="68.9" r="2.1" fill="#9cc46e" opacity="0.47"/>
<circle cx="315.8" cy="118.6" r="2.1" fill="#9cc46e" opacity="0.34"/>
<circle cx="606.2" cy="231.9" r="2.1" fill="#9cc46e" opacity="0.34"/>
<circle cx="588.0" cy="62.1" r="3.3" fill="#3a6e30" opacity="0.39"/>
<circle cx="90.0" cy="84.3" r="2.0" fill="#3a6e30" opacity="0.47"/>
<circle cx="134.0" cy="103.1" r="2.6" fill="#3a6e30" opacity="0.46"/>
<circle cx="162.0" cy="87.8" r="3.2" fill="#9cc46e" opacity="0.25"/>
<circle cx="114.3" cy="296.6" r="3.8" fill="#3a6e30" opacity="0.59"/>
<circle cx="390.1" cy="303.9" r="1.3" fill="#3a6e30" opacity="0.54"/>
<circle cx="321.2" cy="36.3" r="3.2" fill="#3a6e30" opacity="0.32"/>
<circle cx="470.3" cy="250.2" r="2.5" fill="#9cc46e" opacity="0.38"/>
<circle cx="208.8" cy="118.3" r="2.8" fill="#3a6e30" opacity="0.53"/>
<circle cx="564.9" cy="211.4" r="1.6" fill="#3a6e30" opacity="0.46"/>
<circle cx="309.7" cy="132.7" r="1.2" fill="#3a6e30" opacity="0.38"/>
<circle cx="129.6" cy="332.5" r="3.2" fill="#9cc46e" opacity="0.27"/>
<circle cx="437.8" cy="242.2" r="1.8" fill="#9cc46e" opacity="0.42"/>
<circle cx="389.3" cy="183.8" r="1.9" fill="#3a6e30" opacity="0.36"/>
<circle cx="339.1" cy="140.7" r="1.7" fill="#3a6e30" opacity="0.60"/>
<circle cx="261.4" cy="298.5" r="3.5" fill="#3a6e30" opacity="0.32"/>
<circle cx="192.7" cy="0.9" r="1.8" fill="#9cc46e" opacity="0.41"/>
<circle cx="161.9" cy="177.6" r="2.9" fill="#9cc46e" opacity="0.41"/>
<circle cx="478.1" cy="29.3" r="1.5" fill="#9cc46e" opacity="0.33"/>
<circle cx="451.9" cy="245.1" r="3.2" fill="#9cc46e" opacity="0.33"/>
<circle cx="556.5" cy="225.8" r="2.5" fill="#9cc46e" opacity="0.30"/>
<circle cx="254.9" cy="200.2" r="3.7" fill="#3a6e30" opacity="0.35"/>
<circle cx="123.9" cy="219.2" r="2.4" fill="#3a6e30" opacity="0.38"/>
<circle cx="266.8" cy="195.5" r="1.6" fill="#3a6e30" opacity="0.30"/>
<circle cx="344.5" cy="167.2" r="2.3" fill="#3a6e30" opacity="0.53"/>
<circle cx="195.4" cy="177.7" r="3.7" fill="#3a6e30" opacity="0.40"/>
<circle cx="438.0" cy="167.6" r="3.2" fill="#9cc46e" opacity="0.27"/>
<circle cx="340.3" cy="159.5" r="2.4" fill="#9cc46e" opacity="0.26"/>
<circle cx="219.9" cy="82.8" r="2.3" fill="#3a6e30" opacity="0.35"/>
<circle cx="580.9" cy="208.4" r="2.0" fill="#3a6e30" opacity="0.47"/>
<circle cx="394.2" cy="192.4" r="1.3" fill="#9cc46e" opacity="0.44"/>
<circle cx="374.4" cy="225.4" r="2.1" fill="#3a6e30" opacity="0.34"/>
<circle cx="482.2" cy="250.8" r="2.6" fill="#3a6e30" opacity="0.35"/>
<circle cx="595.5" cy="13.1" r="2.7" fill="#3a6e30" opacity="0.53"/>
<circle cx="592.2" cy="197.1" r="3.1" fill="#3a6e30" opacity="0.60"/>
<circle cx="312.8" cy="293.9" r="1.3" fill="#3a6e30" opacity="0.49"/>
<circle cx="161.2" cy="3.3" r="2.0" fill="#9cc46e" opacity="0.46"/>
</g>
<path d="M162 46 L200 50 L205 66 L204 95 L185 112 L165 113 L160 80 Z" fill="#86a676" />
<path d="M223 120 L230 85 L239 59 L255 48 L270 43 L290 55 L300 70 L304 100 L303 125 L290 137 L250 136 Z" fill="#8aab70" />
<path d="M223 120 L230 85 L239 59 L255 48 L270 43 L290 55 L300 70 L304 100 L303 125 L290 137 L250 136 Z" fill="url(#dots)" />
<path d="M297 20 L318 25 L318 64 L300 62 Z" fill="#93ad79" />
<path d="M297 20 L318 25 L318 64 L300 62 Z" fill="url(#dots)" />
<path d="M448 2 L492 2 L494 40 L490 55 L460 50 L452 30 Z" fill="#8fb070" />
<path d="M448 2 L492 2 L494 40 L490 55 L460 50 L452 30 Z" fill="url(#dots)" />
<path d="M515 18 L545 28 L562 55 L560 79 L530 77 L516 55 Z" fill="#8fb070" />
<path d="M515 18 L545 28 L562 55 L560 79 L530 77 L516 55 Z" fill="url(#dots)" />
<path d="M317 98 L338 100 L345 120 L344 138 L322 140 L315 120 Z" fill="#8fa97a" />
<path d="M317 98 L338 100 L345 120 L344 138 L322 140 L315 120 Z" fill="url(#dots)" />
<path d="M328 25 L345 14 L362 18 L372 50 L386 100 L388 120 L360 118 L335 110 L330 60 Z" fill="url(#grid2)" />
<path d="M204 66 L215 63 L230 66 L233 74 L228 78 L208 78 Z" fill="#f4f3ee" />
<path d="M205 75 L226 75 L226 90.5 L205 90.5 Z" fill="#e6cf56" />
<path d="M183 98 L196 96 L206 91 L208 97 L199 106 L186 107 Z" fill="#e8e8e4" />
<path d="M241 212 L259 205 L322 165 L347 163 L373 170 L391 162 L400 158 L427 226 L378 222 L312 234 L310 260 L300 272 L249 293 Z" fill="url(#grid)" />
<path d="M365 173 L400 170 L410 211 L380 212 Z" fill="#d8dcc2" />
<path d="M292 213 L304 213 L304 223 L292 223 Z" fill="#f4f4f0" />
<path d="M222 209 L289 173 L333 158 L391 152 L393 160 L347 163 L322 165 L259 205 L241 212 L232 222 Z" fill="#3f7834" />
<path d="M249 293 L300 272 L310 260 L312 234 L378 222 L427 226 L437 258 L240 326 Z" fill="#93bd62" />
<path d="M312 236 L378 224 L416 228 L424 250 L330 262 Z" fill="#7aa84e" />
<path d="M318 264 L396 252 L397 259 L320 272 Z" fill="#b5c08e" />
<path d="M120 140 L153 140 L181 226 L224 209 L181 231 L103 233 L116 170 Z" fill="url(#grid)" />
<path d="M150 138 L174 140 L237 183 L224 209 L178 225 Z" fill="#8dbb5a" />
<circle cx="142" cy="126" r="12" fill="#4f8a3a"/>
<path d="M148 138 L160 134 L164 142 L152 148 Z" fill="#e2cb58" />
<path d="M196 173 L227 190 L223 197 L192 180 Z" fill="#e0d8a8" />
<path d="M103 235 L224 209 L267 334 L68 337 Z" fill="#a7b58e" />
<path d="M157 226 L206 220 L224 209 L262 330 L176 336 L150 250 Z" fill="#5a8f46" />
<circle cx="176.9" cy="288.5" r="4.2" fill="#3f7533" opacity=".7"/>
<circle cx="217.3" cy="277.5" r="2.6" fill="#78a85a" opacity=".7"/>
<circle cx="187.3" cy="273.7" r="4.3" fill="#4c8a3c" opacity=".7"/>
<circle cx="182.3" cy="291.7" r="2.5" fill="#4c8a3c" opacity=".7"/>
<circle cx="241.9" cy="301.8" r="2.9" fill="#3f7533" opacity=".7"/>
<circle cx="220.3" cy="244.0" r="4.5" fill="#3f7533" opacity=".7"/>
<circle cx="165.0" cy="263.5" r="3.5" fill="#78a85a" opacity=".7"/>
<circle cx="205.1" cy="329.0" r="4.1" fill="#78a85a" opacity=".7"/>
<circle cx="197.5" cy="284.3" r="2.5" fill="#4c8a3c" opacity=".7"/>
<circle cx="209.4" cy="301.5" r="2.4" fill="#3f7533" opacity=".7"/>
<circle cx="245.9" cy="228.6" r="4.4" fill="#78a85a" opacity=".7"/>
<circle cx="214.9" cy="228.7" r="4.3" fill="#4c8a3c" opacity=".7"/>
<circle cx="239.6" cy="229.6" r="2.5" fill="#78a85a" opacity=".7"/>
<circle cx="219.7" cy="330.1" r="3.3" fill="#78a85a" opacity=".7"/>
<circle cx="226.2" cy="239.3" r="3.3" fill="#4c8a3c" opacity=".7"/>
<circle cx="240.5" cy="330.1" r="3.6" fill="#78a85a" opacity=".7"/>
<circle cx="219.2" cy="309.3" r="3.0" fill="#3f7533" opacity=".7"/>
<circle cx="201.7" cy="249.8" r="3.0" fill="#3f7533" opacity=".7"/>
<circle cx="173.6" cy="331.8" r="4.3" fill="#4c8a3c" opacity=".7"/>
<circle cx="180.4" cy="258.7" r="3.0" fill="#4c8a3c" opacity=".7"/>
<circle cx="230.5" cy="283.8" r="4.5" fill="#3f7533" opacity=".7"/>
<circle cx="183.3" cy="282.2" r="3.7" fill="#4c8a3c" opacity=".7"/>
<circle cx="228.9" cy="302.9" r="3.2" fill="#78a85a" opacity=".7"/>
<circle cx="239.5" cy="298.5" r="4.4" fill="#4c8a3c" opacity=".7"/>
<circle cx="214.4" cy="282.8" r="4.2" fill="#3f7533" opacity=".7"/>
<circle cx="196.1" cy="330.1" r="2.7" fill="#4c8a3c" opacity=".7"/>
<circle cx="210.2" cy="239.2" r="2.9" fill="#3f7533" opacity=".7"/>
<circle cx="192.3" cy="265.4" r="2.7" fill="#4c8a3c" opacity=".7"/>
<circle cx="163.1" cy="316.4" r="2.6" fill="#78a85a" opacity=".7"/>
<circle cx="166.9" cy="295.0" r="3.2" fill="#78a85a" opacity=".7"/>
<circle cx="195.5" cy="257.2" r="2.1" fill="#4c8a3c" opacity=".7"/>
<circle cx="193.3" cy="247.3" r="3.2" fill="#78a85a" opacity=".7"/>
<circle cx="216.7" cy="299.8" r="3.5" fill="#3f7533" opacity=".7"/>
<circle cx="193.6" cy="304.2" r="2.3" fill="#3f7533" opacity=".7"/>
<circle cx="227.0" cy="268.1" r="4.1" fill="#78a85a" opacity=".7"/>
<circle cx="219.1" cy="323.7" r="3.8" fill="#3f7533" opacity=".7"/>
<circle cx="191.4" cy="263.8" r="2.3" fill="#4c8a3c" opacity=".7"/>
<circle cx="198.3" cy="328.5" r="2.6" fill="#3f7533" opacity=".7"/>
<circle cx="163.7" cy="246.0" r="3.7" fill="#4c8a3c" opacity=".7"/>
<circle cx="181.0" cy="295.6" r="2.8" fill="#4c8a3c" opacity=".7"/>
<circle cx="244.2" cy="264.0" r="3.8" fill="#4c8a3c" opacity=".7"/>
<circle cx="191.1" cy="317.1" r="3.9" fill="#78a85a" opacity=".7"/>
<circle cx="220.8" cy="321.6" r="2.1" fill="#3f7533" opacity=".7"/>
<circle cx="166.3" cy="227.1" r="3.9" fill="#4c8a3c" opacity=".7"/>
<circle cx="224.5" cy="263.9" r="3.5" fill="#78a85a" opacity=".7"/>
<circle cx="234.3" cy="259.7" r="2.7" fill="#4c8a3c" opacity=".7"/>
<circle cx="194.8" cy="250.0" r="3.4" fill="#78a85a" opacity=".7"/>
<circle cx="194.7" cy="238.7" r="2.1" fill="#4c8a3c" opacity=".7"/>
<circle cx="196.1" cy="256.4" r="4.1" fill="#3f7533" opacity=".7"/>
<circle cx="199.1" cy="290.0" r="3.5" fill="#4c8a3c" opacity=".7"/>
<circle cx="176.0" cy="262.0" r="3.8" fill="#78a85a" opacity=".7"/>
<circle cx="220.7" cy="325.4" r="2.3" fill="#3f7533" opacity=".7"/>
<circle cx="198.3" cy="265.9" r="4.1" fill="#4c8a3c" opacity=".7"/>
<circle cx="179.9" cy="290.6" r="2.2" fill="#3f7533" opacity=".7"/>
<circle cx="234.3" cy="227.9" r="2.5" fill="#4c8a3c" opacity=".7"/>
<circle cx="190.8" cy="237.3" r="2.9" fill="#3f7533" opacity=".7"/>
<circle cx="218.6" cy="230.1" r="2.8" fill="#4c8a3c" opacity=".7"/>
<circle cx="228.2" cy="283.1" r="2.3" fill="#78a85a" opacity=".7"/>
<circle cx="187.5" cy="270.9" r="2.5" fill="#3f7533" opacity=".7"/>
<circle cx="192.6" cy="304.0" r="3.3" fill="#78a85a" opacity=".7"/>
<circle cx="166.3" cy="323.0" r="4.2" fill="#3f7533" opacity=".7"/>
<circle cx="236.2" cy="241.3" r="3.3" fill="#3f7533" opacity=".7"/>
<circle cx="187.8" cy="231.0" r="4.5" fill="#78a85a" opacity=".7"/>
<circle cx="245.4" cy="288.8" r="4.4" fill="#3f7533" opacity=".7"/>
<circle cx="234.9" cy="328.5" r="2.7" fill="#3f7533" opacity=".7"/>
<circle cx="167.1" cy="248.0" r="3.7" fill="#78a85a" opacity=".7"/>
<circle cx="171.8" cy="258.1" r="3.3" fill="#4c8a3c" opacity=".7"/>
<circle cx="231.3" cy="283.4" r="2.6" fill="#3f7533" opacity=".7"/>
<circle cx="235.6" cy="298.3" r="3.5" fill="#3f7533" opacity=".7"/>
<circle cx="217.3" cy="235.2" r="3.3" fill="#4c8a3c" opacity=".7"/>
<path d="M157 244 L181 244 L181 274 L160 274 Z" fill="#dcdccc" />
<path d="M172 288 L200 285 L215 300 L212 330 L178 332 Z" fill="#d7dacb" />
<path d="M185 295 L195 293 L198 318 L188 320 Z" fill="#eeeeea" />
<path d="M92 244 L107 244 L107 283 L90 283 Z" fill="#f0f0ea" />
<path d="M112 265 L131 265 L131 283 L112 283 Z" fill="#efefe9" />
<path d="M122 250 L148 250 L148 272 L122 272 Z" fill="#ececE4" />
<path d="M86 300 L116 300 L116 336 L80 336 Z" fill="#f2f2ee" />
<path d="M131 298 L165 298 L165 321 L131 321 Z" fill="#e6e8e2" />
<path d="M138 319 L172 319 L172 334 L138 334 Z" fill="#e9ebe6" />
<circle cx="141" cy="310" r="4.5" fill="#9cc4ea"/>
<circle cx="162" cy="325" r="5" fill="#8fbde8"/>
<path d="M105 252 L138 256 L136 272 L110 270 Z" fill="#c9a232" />
<path d="M103 270 L114 270 L116 336 L104 336 Z" fill="#c2a035" />
<path d="M135 287 L150 290 L158 313 L146 312 Z" fill="#cdb040" />
<path d="M95 322 L125 318 L130 336 L98 336 Z" fill="#b89a38" />
<path d="M101 235 L148 242 L206 220" fill="none" stroke="#9d9f96" stroke-width="4" />
<path d="M148 242 L176 336" fill="none" stroke="#9d9f96" stroke-width="4" />
<path d="M122 295 L161 282 L206 268 L236 272" fill="none" stroke="#9d9f96" stroke-width="4" />
<path d="M176 332 L270 315" fill="none" stroke="#9d9f96" stroke-width="4" />
<path d="M145 3 L170 3 L166 15 L163 30 L160 60 L158 80 L158 97 L178 102 L180 114 L149 114 L149 80 L148 40 L146 14 Z" fill="#66a0e6" />
<path d="M156 120 L242 136 L274 140 L262 160 L236 183 L210 168 L184 150 L172 136 Z" fill="#5592e0" />
<path d="M200 140 L250 142 L238 170 L215 160 Z" fill="#4684dc" />
<path d="M413 102 L430 101 L441 112 L432 121 L415 122 Z" fill="#5f98e2" />
<path d="M445 144 L466 146 L471 158 L468 176 L455 182 L440 191 L447 170 Z" fill="#5c96e0" />
<path d="M469 223 L481 223 L481 233 L469 233 Z" fill="#6a9ee0" />
<path d="M400 165 L416 156 L430 163 L425 184" fill="none" stroke="#f0efea" stroke-width="5" />
<path d="M588 48 L577 72 L562 94 L548 116 L543 110 L553 96 L570 70 Z" fill="#b9bd74" />
<path d="M144 13 L140 40 L135 75 L127 124 L116 170 L100 230 L85 280 L68 337" fill="none" stroke="#8a5843" stroke-width="5" />
<path d="M144 13 L204 2" fill="none" stroke="#8f5e48" stroke-width="4" />
<path d="M608 2 L596 34 L576 66 L556 88 L543 107 L543 128 L545 160 L548 191 L552 196" fill="none" stroke="#8a5a40" stroke-width="3" />
<path d="M222 209 L289 173 L333 158 L391 152 L433 258" fill="none" stroke="#8c5d4e" stroke-width="4" />
<path d="M222 209 L236 270 L267 337" fill="none" stroke="#8c5d4e" stroke-width="4" />
<path d="M437 258 L480 239 L552 196" fill="none" stroke="#a5736a" stroke-width="5" />
<path d="M358 2 L374 60 L391 152" fill="none" stroke="#a9b09a" stroke-width="2" />
<path d="M335 10 L322 40 L326 95 L364 138" fill="none" stroke="#9fb08e" stroke-width="1.5" />
<path d="M300 138 L340 146 L391 151" fill="none" stroke="#8fa890" stroke-width="3" />
<path d="M416 110 L439 58 L501 53 L530 50" fill="none" stroke="#a9b09a" stroke-width="2" />
<path d="M397 145 L470 128 L536 105" fill="none" stroke="#a9b09a" stroke-width="2" />
<path d="M674 2 L678 45 L677 66 L673 94 L670 132" fill="none" stroke="#afb0a8" stroke-width="2" />
<path d="M240 325 L437 258" fill="none" stroke="#9c9d99" stroke-width="7" />
<path d="M552 196 L620 160 L733 121" fill="none" stroke="#9c9d99" stroke-width="8" />
<path d="M552 198 L611 337" fill="none" stroke="#9c9d99" stroke-width="7" />
<path d="M626 158 L667 259 L692 337" fill="none" stroke="#9c9d99" stroke-width="8" />
<path d="M355 337 L378 320 L404 310 L522 300 L593 280 L665 258 L733 230" fill="none" stroke="#9c9d99" stroke-width="7" />
<path d="M646 337 L689 318 L733 304" fill="none" stroke="#9c9d99" stroke-width="8" />
<path d="M509 306 L513 337" fill="none" stroke="#9c9d99" stroke-width="4" />
<path d="M437 258 L457 337" fill="none" stroke="#9c9d99" stroke-width="6" />
<path d="M486 241 L528 284 L522 336" fill="none" stroke="#4a6a80" stroke-width="2" />
</g>
<g fill="#111">
<path d="M643 18 L643 111" stroke="#999" stroke-width="1.2"/>
<path d="M607 64 L701 64" stroke="#aaa" stroke-width="1.2"/>
<path d="M632 43 L653 43 L667 51 L695 64 L691 91 L664 102 L636 78 L626 74 L619 64 L619 51 Z" fill="none" stroke="#aaa" stroke-width=".8"/>
<path d="M643 64 L619 51 L619.5 64 Z"/>
<path d="M643 64 L628 44 L637 44 Z"/>
<path d="M643 64 L653 43 L667 51 Z"/>
<path d="M643 64 L695 64 L691 91 Z"/>
<path d="M643 64 L626 74 L636 78 Z"/>
<path d="M643 64 L660 100 L665 102 Z"/>
<path d="M601 127.6 L621 127.6 M621 129.4 L642 129.4 M642 127.6 L704 127.6" stroke="#111" stroke-width="1.8"/>
<g font-family="Liberation Serif" font-size="7" fill="#333"><text x="600" y="124">0</text><text x="615" y="124">100</text><text x="636" y="124">200</text><text x="697" y="124">500m</text><text x="646" y="25" font-size="6">N</text></g>
</g>
<g filter="url(#soft2)"><rect x="0" y="337" width="733" height="100" fill="#eceee4"/><path d="M40 337 L266 337 L290 372 L322 437 L40 437 Z" fill="#9aa97e"/><path d="M42 356 L150 352 L256 340" fill="none" stroke="#9c9d96" stroke-width="5"/><path d="M45 410 L160 402 L300 395" fill="none" stroke="#a3a49c" stroke-width="4"/><path d="M150 352 L170 437" fill="none" stroke="#a3a49c" stroke-width="4"/><rect x="223.1" y="405.1" width="4.1" height="3.4" fill="#f2f2ea"/><rect x="157.2" y="365.9" width="6.8" height="2.6" fill="#9c9d96"/><circle cx="121.7" cy="355.3" r="4.5" fill="#d9c070" opacity=".7"/><rect x="165.3" y="385.4" width="8.8" height="6.7" fill="#f2f2ea"/><circle cx="270.7" cy="419.1" r="2.6" fill="#d9c070" opacity=".7"/><circle cx="103.1" cy="391.5" r="3.9" fill="#d9c070" opacity=".7"/><circle cx="200.7" cy="408.4" r="2.1" fill="#4f8a3c" opacity=".7"/><circle cx="115.4" cy="394.9" r="3.2" fill="#d9c070" opacity=".7"/><circle cx="184.0" cy="422.2" r="3.4" fill="#4f8a3c" opacity=".7"/><circle cx="146.3" cy="347.3" r="4.9" fill="#4f8a3c" opacity=".7"/><circle cx="173.0" cy="383.2" r="2.7" fill="#4f8a3c" opacity=".7"/><circle cx="156.5" cy="361.4" r="3.5" fill="#4f8a3c" opacity=".7"/><circle cx="247.5" cy="412.9" r="5.0" fill="#4f8a3c" opacity=".7"/><rect x="187.9" y="375.8" width="4.1" height="4.8" fill="#f2f2ea"/><rect x="200.1" y="364.1" width="7.8" height="3.6" fill="#f2f2ea"/><circle cx="98.7" cy="386.8" r="3.0" fill="#d9c070" opacity=".7"/><rect x="219.4" y="368.9" width="10.4" height="6.2" fill="#f2f2ea"/><circle cx="211.4" cy="411.4" r="2.2" fill="#4f8a3c" opacity=".7"/><circle cx="80.7" cy="391.1" r="2.1" fill="#4f8a3c" opacity=".7"/><circle cx="230.9" cy="428.5" r="4.7" fill="#4f8a3c" opacity=".7"/><rect x="168.4" y="412.3" width="8.3" height="6.7" fill="#f2f2ea"/><circle cx="245.7" cy="429.2" r="2.1" fill="#4f8a3c" opacity=".7"/><rect x="234.1" y="435.6" width="12.9" height="2.0" fill="#9c9d96"/><rect x="218.1" y="429.2" width="8.9" height="6.0" fill="#f2f2ea"/><rect x="140.7" y="428.9" width="5.4" height="6.7" fill="#f2f2ea"/><rect x="239.4" y="385.2" width="7.5" height="2.2" fill="#9c9d96"/><rect x="52.3" y="420.7" width="8.9" height="5.4" fill="#f2f2ea"/><rect x="182.0" y="364.2" width="10.4" height="5.2" fill="#f2f2ea"/><rect x="131.6" y="391.1" width="10.0" height="4.7" fill="#f2f2ea"/><rect x="125.9" y="363.5" width="9.8" height="6.3" fill="#f2f2ea"/><rect x="249.4" y="384.2" width="9.2" height="2.5" fill="#9c9d96"/><circle cx="252.2" cy="367.5" r="3.1" fill="#4f8a3c" opacity=".7"/><circle cx="56.3" cy="433.6" r="4.3" fill="#d9c070" opacity=".7"/><rect x="45.2" y="427.7" width="11.3" height="4.9" fill="#f2f2ea"/><rect x="46.3" y="412.8" width="10.6" height="3.7" fill="#f2f2ea"/><rect x="255.7" y="341.6" width="9.5" height="6.0" fill="#f2f2ea"/><circle cx="228.3" cy="349.6" r="4.6" fill="#4f8a3c" opacity=".7"/><circle cx="251.4" cy="422.0" r="4.5" fill="#4f8a3c" opacity=".7"/><circle cx="173.4" cy="384.4" r="4.5" fill="#4f8a3c" opacity=".7"/><circle cx="90.0" cy="364.4" r="2.7" fill="#d9c070" opacity=".7"/><rect x="72.9" y="416.8" width="7.0" height="2.0" fill="#9c9d96"/><circle cx="173.3" cy="394.3" r="3.8" fill="#4f8a3c" opacity=".7"/><circle cx="167.2" cy="347.3" r="3.4" fill="#4f8a3c" opacity=".7"/><circle cx="209.2" cy="402.8" r="4.0" fill="#4f8a3c" opacity=".7"/><rect x="70.4" y="359.4" width="7.4" height="4.5" fill="#f2f2ea"/><rect x="57.4" y="411.3" width="4.4" height="4.3" fill="#f2f2ea"/><circle cx="142.9" cy="387.0" r="4.3" fill="#4f8a3c" opacity=".7"/><rect x="158.6" y="375.4" width="8.5" height="7.3" fill="#f2f2ea"/><rect x="99.1" y="353.1" width="7.2" height="8.0" fill="#f2f2ea"/><rect x="206.7" y="348.6" width="7.7" height="2.4" fill="#9c9d96"/><rect x="195.8" y="434.2" width="8.8" height="3.0" fill="#9c9d96"/><rect x="195.1" y="418.9" width="9.0" height="6.6" fill="#f2f2ea"/><circle cx="298.4" cy="421.6" r="2.2" fill="#4f8a3c" opacity=".7"/><rect x="228.1" y="349.5" width="13.6" height="2.9" fill="#9c9d96"/><circle cx="69.1" cy="397.2" r="4.3" fill="#4f8a3c" opacity=".7"/><rect x="264.3" y="349.8" width="4.0" height="7.9" fill="#f2f2ea"/><rect x="166.8" y="396.6" width="7.5" height="2.3" fill="#9c9d96"/><circle cx="210.0" cy="371.2" r="3.2" fill="#d9c070" opacity=".7"/><circle cx="192.3" cy="391.9" r="4.9" fill="#4f8a3c" opacity=".7"/><circle cx="254.5" cy="365.3" r="3.8" fill="#4f8a3c" opacity=".7"/><circle cx="101.9" cy="353.0" r="3.8" fill="#4f8a3c" opacity=".7"/><circle cx="257.7" cy="392.0" r="3.4" fill="#4f8a3c" opacity=".7"/><circle cx="52.1" cy="368.3" r="3.9" fill="#d9c070" opacity=".7"/><rect x="63.6" y="425.8" width="12.8" height="2.8" fill="#9c9d96"/><circle cx="126.7" cy="363.3" r="3.3" fill="#4f8a3c" opacity=".7"/><circle cx="55.7" cy="356.5" r="4.5" fill="#4f8a3c" opacity=".7"/><rect x="59.5" y="354.4" width="10.6" height="5.4" fill="#f2f2ea"/><circle cx="117.6" cy="398.3" r="3.7" fill="#d9c070" opacity=".7"/><circle cx="195.0" cy="416.8" r="3.9" fill="#4f8a3c" opacity=".7"/><rect x="151.7" y="423.7" width="10.5" height="2.6" fill="#9c9d96"/><rect x="269.8" y="348.6" width="6.7" height="5.9" fill="#f2f2ea"/><circle cx="242.6" cy="396.0" r="4.3" fill="#4f8a3c" opacity=".7"/><circle cx="134.7" cy="403.8" r="3.4" fill="#d9c070" opacity=".7"/><circle cx="237.1" cy="338.7" r="4.2" fill="#4f8a3c" opacity=".7"/><circle cx="221.4" cy="347.6" r="3.9" fill="#4f8a3c" opacity=".7"/><rect x="225.5" y="431.9" width="5.7" height="6.3" fill="#f2f2ea"/><rect x="52.8" y="381.0" width="9.1" height="6.2" fill="#f2f2ea"/><rect x="69.6" y="351.5" width="6.5" height="5.5" fill="#f2f2ea"/><rect x="193.7" y="369.8" width="4.5" height="7.3" fill="#f2f2ea"/><circle cx="91.1" cy="431.2" r="2.5" fill="#4f8a3c" opacity=".7"/><rect x="189.1" y="344.6" width="8.7" height="4.8" fill="#f2f2ea"/><rect x="63.2" y="402.3" width="11.7" height="4.0" fill="#f2f2ea"/><circle cx="85.3" cy="365.4" r="4.6" fill="#d9c070" opacity=".7"/><circle cx="250.4" cy="359.5" r="3.6" fill="#4f8a3c" opacity=".7"/><circle cx="178.0" cy="430.3" r="3.5" fill="#d9c070" opacity=".7"/><rect x="78.7" y="436.7" width="12.6" height="2.8" fill="#9c9d96"/><circle cx="235.2" cy="430.9" r="3.7" fill="#d9c070" opacity=".7"/><rect x="182.1" y="398.1" width="8.9" height="3.5" fill="#f2f2ea"/><rect x="266.3" y="347.7" width="10.0" height="3.8" fill="#f2f2ea"/><rect x="91.4" y="386.1" width="13.8" height="2.1" fill="#9c9d96"/><circle cx="46.4" cy="354.3" r="3.9" fill="#d9c070" opacity=".7"/><circle cx="258.1" cy="387.8" r="4.5" fill="#4f8a3c" opacity=".7"/><circle cx="137.6" cy="419.2" r="2.3" fill="#4f8a3c" opacity=".7"/><rect x="49.2" y="385.4" width="11.9" height="3.2" fill="#f2f2ea"/><rect x="165.9" y="411.7" width="9.4" height="4.9" fill="#f2f2ea"/><circle cx="98.9" cy="344.5" r="4.0" fill="#4f8a3c" opacity=".7"/><rect x="185.4" y="370.7" width="5.4" height="7.3" fill="#f2f2ea"/><rect x="140.1" y="397.6" width="5.9" height="3.3" fill="#f2f2ea"/><circle cx="153.1" cy="353.0" r="4.9" fill="#4f8a3c" opacity=".7"/><circle cx="140.5" cy="337.4" r="3.8" fill="#4f8a3c" opacity=".7"/><circle cx="129.9" cy="340.9" r="3.3" fill="#4f8a3c" opacity=".7"/><circle cx="273.7" cy="434.3" r="4.3" fill="#4f8a3c" opacity=".7"/><circle cx="233.0" cy="344.6" r="4.3" fill="#4f8a3c" opacity=".7"/><circle cx="244.4" cy="395.6" r="4.4" fill="#d9c070" opacity=".7"/><rect x="254.6" y="360.0" width="13.1" height="2.1" fill="#9c9d96"/><circle cx="119.2" cy="345.8" r="2.4" fill="#4f8a3c" opacity=".7"/><circle cx="155.5" cy="372.4" r="2.9" fill="#4f8a3c" opacity=".7"/><rect x="70.7" y="337.1" width="9.1" height="2.6" fill="#9c9d96"/><circle cx="60.6" cy="344.0" r="3.9" fill="#4f8a3c" opacity=".7"/><circle cx="268.3" cy="434.2" r="3.7" fill="#4f8a3c" opacity=".7"/><circle cx="64.8" cy="403.9" r="4.5" fill="#d9c070" opacity=".7"/><rect x="198.7" y="370.1" width="7.4" height="6.1" fill="#f2f2ea"/><rect x="51.9" y="369.6" width="10.8" height="2.9" fill="#9c9d96"/><rect x="71.8" y="387.8" width="9.1" height="7.8" fill="#f2f2ea"/><circle cx="206.0" cy="432.8" r="2.6" fill="#d9c070" opacity=".7"/><circle cx="256.4" cy="404.4" r="4.7" fill="#4f8a3c" opacity=".7"/><rect x="75.6" y="413.8" width="6.0" height="2.6" fill="#9c9d96"/><rect x="173.0" y="381.4" width="4.8" height="5.6" fill="#f2f2ea"/><rect x="264.2" y="415.5" width="8.6" height="4.7" fill="#f2f2ea"/><circle cx="272.3" cy="418.1" r="2.8" fill="#4f8a3c" opacity=".7"/><rect x="49.5" y="379.9" width="10.2" height="5.6" fill="#f2f2ea"/><rect x="172.6" y="346.1" width="5.5" height="3.8" fill="#f2f2ea"/><circle cx="72.1" cy="369.8" r="3.5" fill="#4f8a3c" opacity=".7"/><rect x="149.5" y="387.6" width="7.3" height="6.3" fill="#f2f2ea"/><rect x="47.6" y="403.5" width="13.8" height="3.0" fill="#9c9d96"/><rect x="123.7" y="367.6" width="4.5" height="6.3" fill="#f2f2ea"/><circle cx="166.5" cy="341.2" r="4.5" fill="#d9c070" opacity=".7"/><rect x="205.9" y="377.0" width="4.4" height="4.3" fill="#f2f2ea"/><rect x="296.9" y="422.0" width="10.9" height="3.1" fill="#f2f2ea"/><rect x="89.8" y="374.3" width="10.5" height="6.9" fill="#f2f2ea"/><circle cx="241.5" cy="398.0" r="4.8" fill="#4f8a3c" opacity=".7"/><rect x="249.9" y="404.0" width="6.1" height="2.4" fill="#9c9d96"/><rect x="174.9" y="412.0" width="7.6" height="5.7" fill="#f2f2ea"/><circle cx="202.2" cy="415.5" r="4.9" fill="#4f8a3c" opacity=".7"/><circle cx="89.2" cy="423.1" r="4.3" fill="#4f8a3c" opacity=".7"/><rect x="275.8" y="420.7" width="9.3" height="2.2" fill="#9c9d96"/><circle cx="153.4" cy="385.7" r="4.1" fill="#4f8a3c" opacity=".7"/><circle cx="76.6" cy="361.2" r="3.1" fill="#4f8a3c" opacity=".7"/><rect x="46.1" y="355.7" width="8.4" height="4.5" fill="#f2f2ea"/><circle cx="259.8" cy="337.8" r="3.1" fill="#d9c070" opacity=".7"/><rect x="247.0" y="359.5" width="7.6" height="2.2" fill="#9c9d96"/><circle cx="273.4" cy="405.2" r="3.3" fill="#d9c070" opacity=".7"/><circle cx="279.0" cy="427.5" r="4.4" fill="#d9c070" opacity=".7"/><circle cx="256.2" cy="352.6" r="2.8" fill="#4f8a3c" opacity=".7"/><rect x="143.5" y="364.1" width="8.2" height="7.4" fill="#f2f2ea"/><circle cx="133.9" cy="355.1" r="2.8" fill="#d9c070" opacity=".7"/><circle cx="68.5" cy="341.9" r="4.9" fill="#4f8a3c" opacity=".7"/><circle cx="219.7" cy="394.5" r="4.3" fill="#d9c070" opacity=".7"/><rect x="297.8" y="400.6" width="12.0" height="6.4" fill="#f2f2ea"/><rect x="144.4" y="426.7" width="9.1" height="2.4" fill="#9c9d96"/><circle cx="82.3" cy="431.9" r="4.0" fill="#d9c070" opacity=".7"/><rect x="98.0" y="411.6" width="12.9" height="2.5" fill="#9c9d96"/><rect x="64.3" y="401.5" width="7.4" height="5.1" fill="#f2f2ea"/><rect x="282.8" y="411.7" width="8.4" height="6.2" fill="#f2f2ea"/><rect x="105.4" y="395.3" width="9.9" height="6.0" fill="#f2f2ea"/><rect x="278.9" y="427.9" width="4.4" height="6.3" fill="#f2f2ea"/><rect x="218.0" y="411.0" width="7.3" height="7.0" fill="#f2f2ea"/><rect x="197.2" y="364.6" width="9.7" height="4.5" fill="#f2f2ea"/><circle cx="283.0" cy="420.9" r="2.6" fill="#4f8a3c" opacity=".7"/><circle cx="48.3" cy="390.8" r="2.3" fill="#d9c070" opacity=".7"/><circle cx="151.7" cy="374.3" r="3.8" fill="#4f8a3c" opacity=".7"/><rect x="158.9" y="406.5" width="9.9" height="5.4" fill="#f2f2ea"/><rect x="193.3" y="398.8" width="13.8" height="2.0" fill="#9c9d96"/><circle cx="225.0" cy="390.3" r="2.7" fill="#4f8a3c" opacity=".7"/><circle cx="155.8" cy="378.7" r="4.7" fill="#4f8a3c" opacity=".7"/><rect x="120.0" y="381.8" width="6.7" height="4.2" fill="#f2f2ea"/><rect x="142.9" y="352.8" width="6.7" height="5.3" fill="#f2f2ea"/><circle cx="162.8" cy="400.8" r="3.4" fill="#4f8a3c" opacity=".7"/><circle cx="150.7" cy="388.5" r="3.1" fill="#4f8a3c" opacity=".7"/><circle cx="296.4" cy="417.7" r="2.4" fill="#d9c070" opacity=".7"/><rect x="98.6" y="398.8" width="9.6" height="2.8" fill="#9c9d96"/><rect x="197.2" y="337.4" width="13.3" height="2.4" fill="#9c9d96"/><circle cx="251.7" cy="357.4" r="3.9" fill="#4f8a3c" opacity=".7"/><rect x="142.8" y="422.2" width="5.4" height="5.8" fill="#f2f2ea"/><circle cx="229.5" cy="339.3" r="2.7" fill="#4f8a3c" opacity=".7"/><circle cx="176.8" cy="387.1" r="3.2" fill="#d9c070" opacity=".7"/><rect x="242.9" y="367.7" width="8.8" height="2.2" fill="#9c9d96"/><circle cx="125.1" cy="431.1" r="3.0" fill="#4f8a3c" opacity=".7"/><circle cx="69.6" cy="405.9" r="2.4" fill="#d9c070" opacity=".7"/><circle cx="136.3" cy="418.5" r="4.9" fill="#4f8a3c" opacity=".7"/><circle cx="199.6" cy="354.2" r="4.2" fill="#4f8a3c" opacity=".7"/><circle cx="79.7" cy="420.3" r="2.4" fill="#d9c070" opacity=".7"/><circle cx="164.7" cy="432.5" r="3.6" fill="#4f8a3c" opacity=".7"/><circle cx="66.9" cy="435.3" r="3.6" fill="#4f8a3c" opacity=".7"/><circle cx="119.5" cy="431.2" r="4.0" fill="#4f8a3c" opacity=".7"/><circle cx="250.9" cy="418.4" r="4.5" fill="#4f8a3c" opacity=".7"/><circle cx="223.3" cy="371.5" r="3.7" fill="#4f8a3c" opacity=".7"/><circle cx="186.8" cy="404.4" r="4.5" fill="#4f8a3c" opacity=".7"/><circle cx="266.1" cy="354.0" r="2.5" fill="#d9c070" opacity=".7"/><rect x="136.2" y="412.9" width="11.8" height="4.1" fill="#f2f2ea"/><circle cx="262.3" cy="394.1" r="4.8" fill="#4f8a3c" opacity=".7"/><circle cx="131.8" cy="432.7" r="3.5" fill="#d9c070" opacity=".7"/><rect x="164.7" y="417.9" width="5.8" height="4.8" fill="#f2f2ea"/><circle cx="222.9" cy="429.6" r="2.5" fill="#4f8a3c" opacity=".7"/><circle cx="263.4" cy="434.9" r="2.9" fill="#d9c070" opacity=".7"/><circle cx="244.5" cy="349.2" r="4.1" fill="#4f8a3c" opacity=".7"/><circle cx="180.9" cy="369.5" r="3.8" fill="#4f8a3c" opacity=".7"/><rect x="157.8" y="365.9" width="11.6" height="7.7" fill="#f2f2ea"/><circle cx="75.9" cy="355.5" r="4.5" fill="#4f8a3c" opacity=".7"/><rect x="193.2" y="435.8" width="7.3" height="3.9" fill="#f2f2ea"/><rect x="241.6" y="360.4" width="11.4" height="3.8" fill="#f2f2ea"/><rect x="127.9" y="423.0" width="5.8" height="7.4" fill="#f2f2ea"/><circle cx="275.8" cy="372.4" r="3.8" fill="#4f8a3c" opacity=".7"/><rect x="241.2" y="403.1" width="9.5" height="3.8" fill="#f2f2ea"/><rect x="255.2" y="344.8" width="8.0" height="7.1" fill="#f2f2ea"/><rect x="133.5" y="376.0" width="9.5" height="4.5" fill="#f2f2ea"/><rect x="123.3" y="338.9" width="5.3" height="3.6" fill="#f2f2ea"/><circle cx="96.8" cy="420.7" r="4.8" fill="#4f8a3c" opacity=".7"/><circle cx="185.6" cy="386.2" r="4.1" fill="#4f8a3c" opacity=".7"/><circle cx="97.3" cy="362.9" r="4.0" fill="#4f8a3c" opacity=".7"/><circle cx="172.3" cy="380.4" r="2.4" fill="#d9c070" opacity=".7"/><circle cx="70.1" cy="403.3" r="3.0" fill="#d9c070" opacity=".7"/><circle cx="107.4" cy="402.2" r="2.1" fill="#4f8a3c" opacity=".7"/><rect x="63.3" y="348.2" width="4.2" height="6.8" fill="#f2f2ea"/><rect x="207.5" y="393.3" width="5.2" height="7.7" fill="#f2f2ea"/><circle cx="159.3" cy="366.6" r="3.6" fill="#4f8a3c" opacity=".7"/><rect x="272.5" y="389.7" width="4.6" height="7.3" fill="#f2f2ea"/><rect x="251.0" y="407.3" width="11.1" height="5.5" fill="#f2f2ea"/><circle cx="222.8" cy="340.3" r="4.4" fill="#4f8a3c" opacity=".7"/><circle cx="250.3" cy="416.7" r="2.7" fill="#4f8a3c" opacity=".7"/><rect x="264.7" y="427.8" width="10.2" height="2.9" fill="#9c9d96"/><rect x="45.3" y="426.5" width="5.6" height="5.1" fill="#f2f2ea"/><rect x="210.2" y="363.4" width="10.7" height="5.9" fill="#f2f2ea"/><circle cx="155.3" cy="413.9" r="4.7" fill="#4f8a3c" opacity=".7"/><rect x="143.7" y="352.2" width="9.3" height="4.6" fill="#f2f2ea"/><circle cx="54.3" cy="390.1" r="4.7" fill="#4f8a3c" opacity=".7"/><rect x="117.1" y="371.9" width="11.4" height="2.1" fill="#9c9d96"/><circle cx="138.3" cy="355.3" r="4.0" fill="#d9c070" opacity=".7"/><circle cx="163.5" cy="341.4" r="2.7" fill="#4f8a3c" opacity=".7"/><rect x="174.5" y="359.3" width="11.1" height="6.1" fill="#f2f2ea"/><rect x="254.0" y="399.8" width="11.9" height="4.2" fill="#f2f2ea"/><rect x="49.7" y="366.5" width="7.2" height="6.4" fill="#f2f2ea"/><rect x="173.2" y="385.1" width="9.8" height="3.0" fill="#9c9d96"/><rect x="219.8" y="378.5" width="7.7" height="2.2" fill="#9c9d96"/><circle cx="275.8" cy="372.9" r="4.0" fill="#4f8a3c" opacity=".7"/><rect x="280.3" y="392.4" width="11.6" height="2.6" fill="#9c9d96"/><rect x="201.9" y="362.3" width="7.8" height="2.9" fill="#9c9d96"/><rect x="230.1" y="371.8" width="10.3" height="6.4" fill="#f2f2ea"/><rect x="259.3" y="355.3" width="5.5" height="5.5" fill="#f2f2ea"/><rect x="237.1" y="373.9" width="7.9" height="5.2" fill="#f2f2ea"/><circle cx="253.7" cy="436.1" r="2.8" fill="#4f8a3c" opacity=".7"/><rect x="92.6" y="337.7" width="5.4" height="4.2" fill="#f2f2ea"/><rect x="145.2" y="419.8" width="12.8" height="2.6" fill="#9c9d96"/><rect x="295.5" y="431.9" width="7.1" height="7.9" fill="#f2f2ea"/><rect x="106.7" y="417.2" width="11.8" height="4.0" fill="#f2f2ea"/><circle cx="245.1" cy="398.2" r="4.6" fill="#4f8a3c" opacity=".7"/><rect x="105.2" y="407.9" width="10.1" height="6.1" fill="#f2f2ea"/><circle cx="213.6" cy="416.5" r="4.0" fill="#4f8a3c" opacity=".7"/><circle cx="252.8" cy="427.9" r="2.2" fill="#4f8a3c" opacity=".7"/><path d="M266 337 Q285 360 300 395 T322 437" fill="none" stroke="#b88878" stroke-width="5"/><path d="M0 370 L42 368" stroke="#9a9a96" stroke-width="8" fill="none"/><g fill="none" stroke="#9e9e9a" stroke-width="7"><path d="M362 330 L330 362"/><path d="M384 330 L409 373 L405 437"/><path d="M330 416 L409 373 L455 355"/><path d="M344 362 L380 398" stroke-width="4"/><path d="M455 330 L466 377 L484 412 L491 437"/><path d="M400 440 L484 409 L620 351 L733 325" stroke-width="9"/><path d="M509 330 L541 402 L562 437" stroke-width="6"/><path d="M606 330 L625 352 L645 412 L652 437"/><path d="M692 330 L717 377 L733 412"/><path d="M540 437 L733 362" stroke-width="8"/></g></g><rect x="0" y="337" width="733" height="100" fill="#fafaf6" opacity=".8"/>
</svg>
  </div>
  <div class="abs" style="left:40px;top:364px;font-size:33px;font-weight:300;color:#505050;line-height:1">旅游规划与开发</div>
  <div class="abs" style="left:574px;top:371px;font-size:14px;color:#666;line-height:1">主讲教师<span style="margin-left:2px">:</span><span style="margin-left:8px">庹玲</span></div>
  <div class="abs" style="left:0;top:435px;width:733px;height:1px;background:#cfcfcf"></div>
  <!-- rating -->
  <div class="abs" style="left:428px;top:450px;width:68px;height:21px;border-radius:11px;background:#1e7bd2;color:#fff;font-size:12px;font-weight:bold;line-height:22px;text-align:center;-webkit-text-stroke:.35px #fff">课程评价</div>
  <svg class="abs" style="left:500px;top:446px" width="110" height="30" viewBox="0 0 110 30"><g fill="#f2a30c" stroke="#f2a30c" stroke-width="0.8" stroke-linejoin="round"><path transform="translate(13.9 15.20)" d="M0.00 -7.90 L2.35 -3.24 L7.51 -2.44 L3.80 1.24 L4.64 6.39 L0.00 4.00 L-4.64 6.39 L-3.80 1.24 L-7.51 -2.44 L-2.35 -3.24Z"/><path transform="translate(35.0 15.20)" d="M0.00 -7.90 L2.35 -3.24 L7.51 -2.44 L3.80 1.24 L4.64 6.39 L0.00 4.00 L-4.64 6.39 L-3.80 1.24 L-7.51 -2.44 L-2.35 -3.24Z"/><path transform="translate(56.2 15.20)" d="M0.00 -7.90 L2.35 -3.24 L7.51 -2.44 L3.80 1.24 L4.64 6.39 L0.00 4.00 L-4.64 6.39 L-3.80 1.24 L-7.51 -2.44 L-2.35 -3.24Z"/><path transform="translate(77.6 15.20)" d="M0.00 -7.90 L2.35 -3.24 L7.51 -2.44 L3.80 1.24 L4.64 6.39 L0.00 4.00 L-4.64 6.39 L-3.80 1.24 L-7.51 -2.44 L-2.35 -3.24Z"/><path transform="translate(98.8 15.20)" d="M0.00 -7.90 L2.35 -3.24 L7.51 -2.44 L3.80 1.24 L4.64 6.39 L0.00 4.00 L-4.64 6.39 L-3.80 1.24 L-7.51 -2.44 L-2.35 -3.24Z"/></g></svg>
  <div class="abs" style="left:624px;top:449px;color:#e8642c;font-size:24px;transform:scaleX(.88);transform-origin:0 0">5.<span style="font-size:15px">0</span></div>
  <div class="abs" style="left:659px;top:455px;color:#999;font-size:12px">(1 人评价)</div>
  <div class="abs" style="left:504px;top:492px;color:#333;font-size:14px">课程访问量(PV值)<span style="margin-left:2px">:</span></div>
  <div class="abs" style="left:636px;top:485px;color:#e8642c;font-size:24px;font-style:italic">640575</div>
  <!-- info -->
  <div class="info" style="top:518px"><b>学校</b><em>:</em><span>湖北汽车工业学院</span></div>
  <div class="info" style="top:538px"><b>开课院系</b><em>:</em><span>经济管理学院</span></div>
  <div class="info" style="top:560px"><b>编号</b><em>:</em><span>060820</span></div>
  <div class="info" style="top:581px"><b>学分</b><em>:</em><span>3.0</span></div>
  <div class="info" style="top:602px"><b>课时</b><em>:</em><span>48</span></div>
  <!-- toc -->
  <div id="toc">
    <ul>
      <li style="top:28px">课程介绍</li>
      <li style="top:58px">课程评价</li>
      <li style="top:88px">教学资源</li>
      <li style="top:118px">课程章节</li>
    </ul>
  </div>
  <svg class="abs" style="left:63px;top:645px" width="27" height="56" viewBox="0 0 27 56">
    <defs><linearGradient id="rg" x1="0" x2="1"><stop offset="0" stop-color="#c9c9c9"/><stop offset=".5" stop-color="#dadada"/><stop offset="1" stop-color="#c4c4c4"/></linearGradient></defs>
    <path d="M0.5 0H26V50L13 46L0.5 50Z" fill="url(#rg)"/>
    <path d="M0.5 50.5L13 46.5L26 50.5" fill="none" stroke="#999" stroke-width="1.2"/>
  </svg>
  <div class="abs" style="left:69px;top:655px;font-size:14px;font-weight:bold;color:#222;line-height:15px;white-space:normal;width:16px">目录</div>
  <div class="abs" style="left:30px;top:865px;font-size:20px;color:#3a3a3a">课程介绍</div>
  <div class="abs" style="left:30px;top:894px;width:673px;height:1px;background:#ccc"></div>
</div>
<div id="right">
  <div class="abs" style="left:0;top:0;width:1px;height:923px;background:#1c5e88"></div>
  <div class="abs" style="left:148px;top:32px;font-size:24px;color:#fff">课程章节</div>
  <div class="dash" style="top:81px"></div>
  <div class="circ" style="top:104px"><svg width="80" height="80" viewBox="0 0 80 80"><path d="M28 27.5 L41 21.3 L46.3 21.3 L46.3 62.6 L37.1 62.6 L37.1 31.5 L28 34.5 Z" fill="#74acf4"/></svg></div>
  <div class="t" style="top:103px">导论</div>
  <div class="t" style="top:137px"><i>1.1</i>相关概念界定</div>
  <div class="t" style="top:176px"><i>1.2</i>历史发展沿革</div>
  <div class="t" style="top:215px"><i>1.3</i>学习的价值与方法</div>
  <div class="dash" style="top:273px"></div>
  <div class="circ" style="top:296px"><svg width="80" height="80" viewBox="0 0 80 80"><text x="23.5" y="63" font-size="59">2</text></svg></div>
  <div class="t" style="top:295px">旅游规划与开发的概念体系</div>
  <div class="t" style="top:329px"><i>2.1</i>核心理论</div>
  <div class="t" style="top:368px"><i>2.2</i>相关理论</div>
  <div class="t" style="top:407px"><i>2.3</i>前沿理论</div>
  <div class="dash" style="top:465px"></div>
  <div class="circ" style="top:488px"><svg width="80" height="80" viewBox="0 0 80 80"><text x="24.5" y="63" font-size="59">3</text></svg></div>
  <div class="t" style="top:486px;white-space:normal;width:250px">旅游规划与开发的理论基础与技术方法</div>
  <div class="t" style="top:545px"><i>3.1</i>基本程序</div>
  <div class="t" style="top:584px"><i>3.2</i>基本路线</div>
  <div class="t" style="top:623px"><i>3.3</i>高新技术</div>
  <div class="dash" style="top:681px"></div>
  <div class="circ" style="top:704px"><svg width="80" height="80" viewBox="0 0 80 80"><path fill-rule="evenodd" fill="#74acf4" d="M42 22 L50.5 22 L50.5 48 L56 48 L56 54 L50.5 54 L50.5 63 L42 63 L42 54 L24.2 54 L24.2 47.5 Z M42 34 L31.5 48 L42 48 Z"/></svg></div>
  <div class="t" style="top:703px">旅游规划与开发的类型与范式</div>
  <div class="t" style="top:737px"><i>4.1</i>基本类型</div>
  <div class="t" style="top:776px"><i>4.2</i>主要内容</div>
  <div class="t" style="top:815px"><i>4.3</i>标准规范</div>
  <div class="dash" style="top:873px"></div>
  <div class="circ" style="top:896px"><svg width="80" height="80" viewBox="0 0 80 80"><text x="25.5" y="63" font-size="59">5</text></svg></div>
  <div class="t" style="top:895px">旅游规划与开发的设计方法</div>
</div>
</div>
</body></html>
